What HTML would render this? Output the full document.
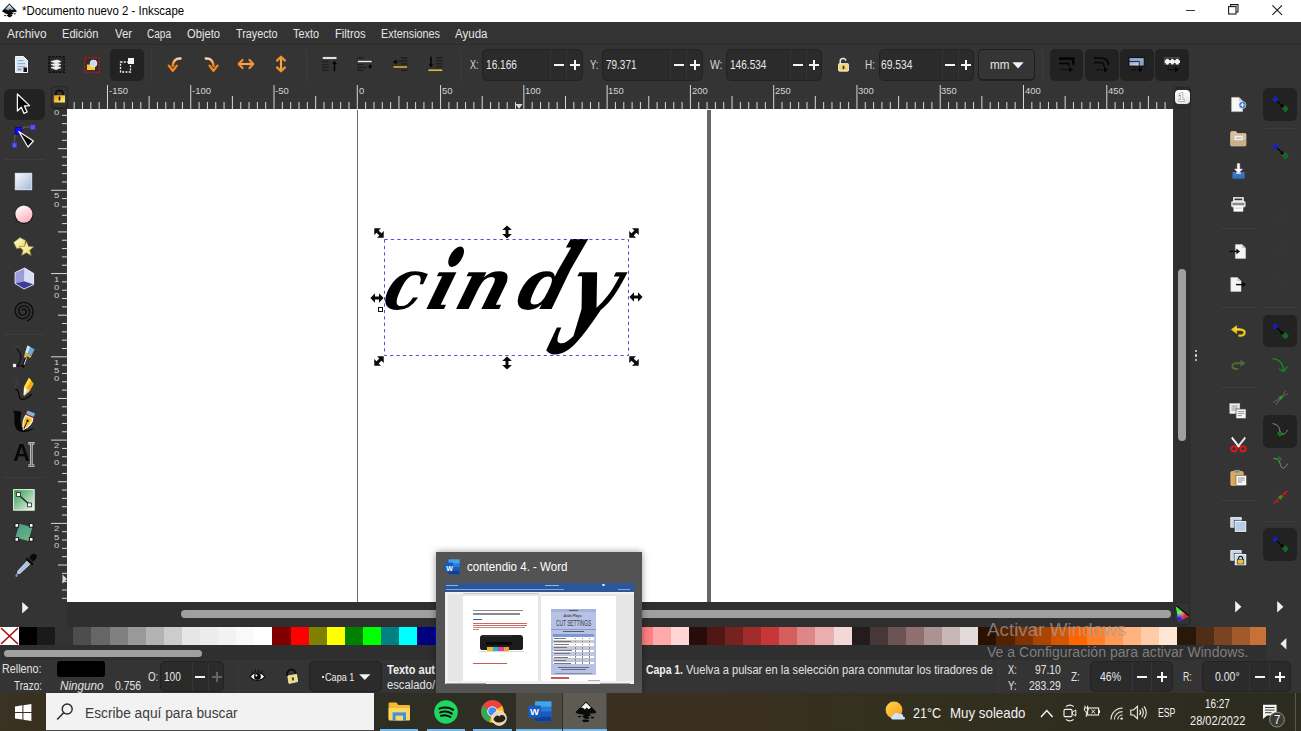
<!DOCTYPE html><html lang="es"><head><meta charset="utf-8"><title>Documento nuevo 2 - Inkscape</title><style>
*{margin:0;padding:0;box-sizing:border-box}
html,body{width:1301px;height:731px;overflow:hidden;background:#343434;font-family:"Liberation Sans",sans-serif;font-size:12px;color:#ddd}
.a{position:absolute}
.t{position:absolute;white-space:nowrap;line-height:1;transform-origin:0 0}
#title{left:0;top:0;width:1301px;height:22px;background:#fff}
#menu{left:0;top:22px;width:1301px;height:22px;background:#333}
#tb{left:0;top:44px;width:1301px;height:42px;background:#343434;border-top:1px solid #2c2c2c}
.box{position:absolute;background:#2b2b2b;border:1px solid #222;border-radius:5px}
.sel{position:absolute;background:#222;border-radius:5px}
.sep{position:absolute;background:#3e3e3e}
#canvas{left:67px;top:108.5px;width:1106px;height:493px;background:#fff;overflow:hidden}
#task{left:0;top:693px;width:1301px;height:38px;background:linear-gradient(90deg,#3a3222 0,#37301f 3.5%,#2f2e24 29%,#2f2e24 39%,#3b2f22 47%,#3a2f20 55%,#34301f 68%,#2e2d1f 85%,#2c2c1e 100%)}
svg{position:absolute;overflow:visible}
</style></head><body>
<div id="title" class="a"></div>
<div class="t" style="left:22px;top:5px;font-size:12px;color:#000;transform:scaleX(0.949);">*Documento nuevo 2 - Inkscape</div>
<div id="menu" class="a"></div>
<div class="t" style="left:7px;top:27.5px;font-size:12px;color:#e4e4e4;transform:scaleX(0.987);">Archivo</div>
<div class="t" style="left:62px;top:27.5px;font-size:12px;color:#e4e4e4;transform:scaleX(0.927);">Edición</div>
<div class="t" style="left:114.5px;top:27.5px;font-size:12px;color:#e4e4e4;transform:scaleX(0.944);">Ver</div>
<div class="t" style="left:146.5px;top:27.5px;font-size:12px;color:#e4e4e4;transform:scaleX(0.837);">Capa</div>
<div class="t" style="left:186.5px;top:27.5px;font-size:12px;color:#e4e4e4;transform:scaleX(0.933);">Objeto</div>
<div class="t" style="left:235.5px;top:27.5px;font-size:12px;color:#e4e4e4;transform:scaleX(0.898);">Trayecto</div>
<div class="t" style="left:293px;top:27.5px;font-size:12px;color:#e4e4e4;transform:scaleX(0.907);">Texto</div>
<div class="t" style="left:334.5px;top:27.5px;font-size:12px;color:#e4e4e4;transform:scaleX(0.934);">Filtros</div>
<div class="t" style="left:380.5px;top:27.5px;font-size:12px;color:#e4e4e4;transform:scaleX(0.903);">Extensiones</div>
<div class="t" style="left:454.5px;top:27.5px;font-size:12px;color:#e4e4e4;transform:scaleX(0.961);">Ayuda</div>
<div id="tb" class="a"></div>
<svg width="13" height="17" viewBox="0 0 13 17" style="left:15px;top:56px;"><path d="M0.5 0.5 H8.5 L12.5 4.5 V16.5 H0.5 Z" fill="#dfe9f5" stroke="#f4f4f4" stroke-width="1"/><rect x="2.5" y="4" width="6" height="1.2" fill="#8fb0d8"/><rect x="2.5" y="7" width="7.5" height="1.2" fill="#8fb0d8"/><rect x="2.5" y="10" width="7.5" height="1.2" fill="#8fb0d8"/><rect x="2.5" y="12.5" width="4" height="2" fill="#9a9a9a"/><rect x="8.5" y="11.5" width="3.5" height="4.5" fill="#111"/></svg>
<svg width="17" height="17" viewBox="0 0 17 17" style="left:48px;top:56px;"><rect x="0.8" y="0.8" width="15.4" height="15.4" fill="#2a2a2a" stroke="#0c0c0c" stroke-width="1.4" stroke-dasharray="2 1.4"/><path d="M3 5.5 L9 4 L13 5.5 L8 7.2 Z M3 8.5 L9 7.2 L13 8.5 L8 10.3 Z M3 11.6 L9 10.3 L13 11.6 L8 13.6 Z" fill="#f4f4f4" stroke="#e8e8e8" stroke-width="0.8"/></svg>
<svg width="16" height="16" viewBox="0 0 16 16" style="left:84px;top:57px;"><rect x="0.8" y="0.8" width="14.4" height="14.4" fill="#2f2f2f" stroke="#d01010" stroke-width="1.4" stroke-dasharray="2 1.4"/><path d="M3 7.5 H8 L9 9 H11 V13 H3 Z" fill="#f2cf3a"/><circle cx="9.5" cy="6.5" r="3.4" fill="#c9d9ee" stroke="#e9eef5" stroke-width="0.8"/></svg>
<div class="a" style="left:109.5px;top:48.5px;width:34.5px;height:32.5px;background:#222;border-radius:5px"></div>
<svg width="17" height="17" viewBox="0 0 17 17" style="left:119px;top:57px;"><rect x="1.5" y="5" width="10" height="10" fill="none" stroke="#f0f0f0" stroke-width="1.3" stroke-dasharray="2 1.3"/><rect x="9" y="1" width="6" height="6" fill="#f4f4f4"/></svg>
<div class="a" style="left:151px;top:49px;width:1px;height:33px;background:#3c3c3c;"></div>
<svg width="16" height="16" viewBox="0 0 16 16" style="left:168px;top:56px;"><defs><linearGradient id="og" x1="0" y1="0" x2="0" y2="1"><stop offset="0" stop-color="#ffd9a8"/><stop offset="0.5" stop-color="#f59a36"/><stop offset="1" stop-color="#e67c10"/></linearGradient></defs><path d="M13.5 2.6 C7.5 2 4.8 5 4.8 11" fill="none" stroke="url(#og)" stroke-width="2.4"/><path d="M0.8 9.6 L4.8 14.8 L8.8 9.6" fill="none" stroke="#ef8a1e" stroke-width="2.3" stroke-linejoin="round" stroke-linecap="round"/></svg>
<svg width="16" height="16" viewBox="0 0 16 16" style="left:203px;top:56px;"><path d="M1.8 2.6 C7.8 2 10.5 5 10.5 11" fill="none" stroke="url(#og)" stroke-width="2.4"/><path d="M6.5 9.6 L10.5 14.8 L14.5 9.6" fill="none" stroke="#ef8a1e" stroke-width="2.3" stroke-linejoin="round" stroke-linecap="round"/></svg>
<svg width="18" height="12" viewBox="0 0 18 12" style="left:237px;top:58px;"><path d="M2 6 H16" stroke="#f7a550" stroke-width="2.2"/><path d="M5.5 2 L1.6 6 L5.5 10 M12.5 2 L16.4 6 L12.5 10" fill="none" stroke="#f2902a" stroke-width="2.2" stroke-linejoin="round" stroke-linecap="round"/></svg>
<svg width="12" height="18" viewBox="0 0 12 18" style="left:275px;top:55px;"><path d="M6 2 V16" stroke="#f7a550" stroke-width="2.2"/><path d="M2 5.6 L6 1.7 L10 5.6 M2 12.4 L6 16.3 L10 12.4" fill="none" stroke="#f2902a" stroke-width="2.2" stroke-linejoin="round" stroke-linecap="round"/></svg>
<div class="a" style="left:305.5px;top:49px;width:1px;height:33px;background:#3c3c3c;"></div>
<svg width="16" height="16" viewBox="0 0 16 16" style="left:322px;top:56px;"><rect x="0.3" y="0.8" width="14.6" height="2.4" fill="#f4f6fa" stroke="#222" stroke-width="0.6"/><g fill="#1f1f1f"><rect x="0" y="4.8" width="6.6" height="1.4"/><rect x="0" y="7.8" width="6.6" height="1.4"/><rect x="0" y="10.7" width="6.6" height="1.4"/><rect x="0" y="13.6" width="6.6" height="1.4"/></g><path d="M12.5 15.2 V7" stroke="#050505" stroke-width="1.5"/><path d="M10.2 8 L12.5 4.6 L14.8 8 Z" fill="#050505"/></svg>
<svg width="16" height="16" viewBox="0 0 16 16" style="left:357px;top:56px;"><g fill="#1f1f1f"><rect x="0" y="1.3" width="6.6" height="1.4"/><rect x="0" y="8" width="6.6" height="1.4"/><rect x="0" y="10.9" width="9.6" height="1.4"/><rect x="0" y="13.7" width="6.6" height="1.4"/></g><rect x="0.6" y="4.4" width="14.4" height="2.2" fill="#eef2f8" stroke="#222" stroke-width="0.6"/><path d="M11 11.2 L13.2 8 L15.4 11.2 Z M12.6 11 h1.2 v2 h-1.2z" fill="#050505"/></svg>
<svg width="16" height="16" viewBox="0 0 16 16" style="left:392px;top:56px;"><g fill="#1f1f1f"><rect x="9" y="1.3" width="6.6" height="1.4"/><rect x="6.2" y="4.2" width="9.4" height="1.4"/><rect x="9" y="7.2" width="6.6" height="1.4"/><rect x="9" y="13.7" width="6.6" height="1.4"/></g><rect x="1" y="9.9" width="14.4" height="2.2" fill="#d8b24a" stroke="#222" stroke-width="0.6"/><path d="M1 6 L4.4 3.6 V8.4 Z M4 5.4 h2 v1.2 h-2z" fill="#050505"/></svg>
<svg width="16" height="16" viewBox="0 0 16 16" style="left:427px;top:56px;"><g fill="#1f1f1f"><rect x="9" y="1.3" width="6.6" height="1.4"/><rect x="9" y="4.2" width="6.6" height="1.4"/><rect x="9" y="7.2" width="6.6" height="1.4"/><rect x="9" y="10" width="6.6" height="1.4"/></g><rect x="1" y="13" width="14.6" height="2.3" fill="#d8b24a" stroke="#222" stroke-width="0.6"/><path d="M4 0.8 V9" stroke="#050505" stroke-width="1.5"/><path d="M1.7 8.2 L4 11.6 L6.3 8.2 Z" fill="#050505"/></svg>
<div class="a" style="left:459.5px;top:49px;width:1px;height:33px;background:#3c3c3c;"></div>
<div class="box" style="left:482px;top:48.5px;width:100.5px;height:32.0px"></div>
<div class="t" style="left:470px;top:58.5px;font-size:12px;color:#d6d6d6;transform:scaleX(0.75);">X:</div>
<div class="t" style="left:485.5px;top:58.5px;font-size:12px;color:#e6e6e6;transform:scaleX(0.845);">16.166</div>
<div class="a" style="left:550px;top:49.5px;width:1px;height:30.0px;background:#353535;"></div>
<div class="a" style="left:566px;top:49.5px;width:1px;height:30.0px;background:#353535;"></div>
<div class="a" style="left:554px;top:64px;width:10px;height:2px;background:#f4f4f4;"></div>
<div class="a" style="left:570px;top:64px;width:10px;height:2px;background:#f4f4f4;"></div>
<div class="a" style="left:574px;top:60px;width:2px;height:10px;background:#f4f4f4;"></div>
<div class="box" style="left:602px;top:48.5px;width:100.5px;height:32.0px"></div>
<div class="t" style="left:590px;top:58.5px;font-size:12px;color:#d6d6d6;transform:scaleX(0.796);">Y:</div>
<div class="t" style="left:605.5px;top:58.5px;font-size:12px;color:#e6e6e6;transform:scaleX(0.831);">79.371</div>
<div class="a" style="left:670px;top:49.5px;width:1px;height:30.0px;background:#353535;"></div>
<div class="a" style="left:686px;top:49.5px;width:1px;height:30.0px;background:#353535;"></div>
<div class="a" style="left:674px;top:64px;width:10px;height:2px;background:#f4f4f4;"></div>
<div class="a" style="left:690px;top:64px;width:10px;height:2px;background:#f4f4f4;"></div>
<div class="a" style="left:694px;top:60px;width:2px;height:10px;background:#f4f4f4;"></div>
<div class="box" style="left:726px;top:48.5px;width:96px;height:32.0px"></div>
<div class="t" style="left:710px;top:58.5px;font-size:12px;color:#d6d6d6;transform:scaleX(0.865);">W:</div>
<div class="t" style="left:729.5px;top:58.5px;font-size:12px;color:#e6e6e6;transform:scaleX(0.841);">146.534</div>
<div class="a" style="left:789.5px;top:49.5px;width:1px;height:30.0px;background:#353535;"></div>
<div class="a" style="left:805.5px;top:49.5px;width:1px;height:30.0px;background:#353535;"></div>
<div class="a" style="left:793px;top:64px;width:10px;height:2px;background:#f4f4f4;"></div>
<div class="a" style="left:809px;top:64px;width:10px;height:2px;background:#f4f4f4;"></div>
<div class="a" style="left:813px;top:60px;width:2px;height:10px;background:#f4f4f4;"></div>
<div class="box" style="left:878.5px;top:48.5px;width:95.0px;height:32.0px"></div>
<div class="t" style="left:864.5px;top:58.5px;font-size:12px;color:#d6d6d6;transform:scaleX(0.833);">H:</div>
<div class="t" style="left:881px;top:58.5px;font-size:12px;color:#e6e6e6;transform:scaleX(0.858);">69.534</div>
<div class="a" style="left:941.5px;top:49.5px;width:1px;height:30.0px;background:#353535;"></div>
<div class="a" style="left:957.5px;top:49.5px;width:1px;height:30.0px;background:#353535;"></div>
<div class="a" style="left:945px;top:64px;width:10px;height:2px;background:#f4f4f4;"></div>
<div class="a" style="left:961px;top:64px;width:10px;height:2px;background:#f4f4f4;"></div>
<div class="a" style="left:965px;top:60px;width:2px;height:10px;background:#f4f4f4;"></div>
<svg width="13" height="15" viewBox="0 0 13 15" style="left:837px;top:57px;"><path d="M3.2 7 V4.2 C3.2 0.8 8.4 0.6 8.8 3.6" fill="none" stroke="#e8e8e8" stroke-width="1.5"/><rect x="1.5" y="6.6" width="10" height="7.6" rx="1" fill="#f1d77a" stroke="#fff6d0" stroke-width="0.8"/><rect x="5.6" y="8.8" width="1.8" height="3.4" fill="#333"/></svg>
<div class="box" style="left:978px;top:48.5px;width:57px;height:32px;background:#353535;border-color:#1f1f1f;border-bottom-width:2px"></div>
<div class="t" style="left:990px;top:58.5px;font-size:12px;color:#e6e6e6;transform:scaleX(0.975);">mm</div>
<svg width="12" height="7" viewBox="0 0 12 7" style="left:1012px;top:62px;"><path d="M0.3 0.2 H11.7 L6 6.6 Z" fill="#f4f4f4"/></svg>
<div class="a" style="left:1042px;top:49px;width:1px;height:33px;background:#3c3c3c;"></div>
<div class="a" style="left:1049.8px;top:48.5px;width:33.6px;height:32px;background:#222;border-radius:5px"></div>
<div class="a" style="left:1085.2px;top:48.5px;width:33.6px;height:32px;background:#222;border-radius:5px"></div>
<div class="a" style="left:1120.2px;top:48.5px;width:33.6px;height:32px;background:#222;border-radius:5px"></div>
<div class="a" style="left:1155.4px;top:48.5px;width:33.6px;height:32px;background:#222;border-radius:5px"></div>
<svg width="16" height="17" viewBox="0 0 16 17" style="left:1058px;top:57px;"><path d="M1 1.6 H15.2 V8" fill="none" stroke="#050505" stroke-width="2.6"/><path d="M1 6.4 H10.5 V9" fill="none" stroke="#050505" stroke-width="1.6"/><path d="M2.5 12.6 H11" stroke="#050505" stroke-width="1.3" stroke-dasharray="1.6 1.2"/><path d="M11 9.8 L15 12.6 L11 15.4 Z" fill="#050505"/></svg>
<svg width="16" height="17" viewBox="0 0 16 17" style="left:1093px;top:57px;"><path d="M1 1 H8 C13 1 15.4 3.6 15.4 8" fill="none" stroke="#050505" stroke-width="1.7"/><path d="M1 5.6 H6.4 C9.6 5.6 11 7 11 9.4" fill="none" stroke="#050505" stroke-width="1.5"/><path d="M2.5 12.6 H11" stroke="#050505" stroke-width="1.3" stroke-dasharray="1.6 1.2"/><path d="M11 9.8 L15 12.6 L11 15.4 Z" fill="#050505"/></svg>
<svg width="17" height="17" viewBox="0 0 17 17" style="left:1128px;top:57px;"><defs><linearGradient id="bg3" x1="0" y1="0" x2="1" y2="1"><stop offset="0" stop-color="#7fa3cc"/><stop offset="1" stop-color="#d6e2f0"/></linearGradient></defs><rect x="1" y="0.6" width="15.2" height="8.4" fill="#8aa9cf" stroke="#050505" stroke-width="0.9"/><rect x="1" y="4.6" width="10.2" height="4.4" fill="url(#bg3)" stroke="#1a1a1a" stroke-width="0.9"/><path d="M3.5 12.6 H11" stroke="#050505" stroke-width="1.3" stroke-dasharray="1.6 1.2"/><path d="M11 9.8 L15 12.6 L11 15.4 Z" fill="#050505"/></svg>
<svg width="17" height="17" viewBox="0 0 17 17" style="left:1164px;top:57px;"><rect x="0.6" y="0.4" width="15.4" height="7.4" fill="#f4f4f4"/><g fill="#161616"><rect x="0.6" y="0.4" width="15.4" height="1.3"/><path d="M0.6 1.5 h2.4 l-2.4 2.2z M0.6 7.8 v-2.2 l2.4 2.2z M8.3 1.5 l-2.3 2.1 l-2.3 -2.1z M8.3 7.8 l-2.3 -2.1 l-2.3 2.1z M13 1.5 l-2.3 2.1 l-2.3 -2.1z M13 7.8 l-2.3 -2.1 l-2.3 2.1z M16 1.5 v2.2 l-2.4 -2.2z M16 7.8 v-2.2 l-2.4 2.2z"/></g><path d="M3.5 12.6 H11" stroke="#050505" stroke-width="1.3" stroke-dasharray="1.6 1.2"/><path d="M11 9.8 L15 12.6 L11 15.4 Z" fill="#050505"/></svg>
<div id="canvas" class="a">
<div class="a" style="left:290px;top:1px;width:1px;height:492px;background:#6a6a6a"></div>
<div class="a" style="left:640px;top:1px;width:3.5px;height:492px;background:#666"></div>
</div>
<style>.L{position:absolute;font-family:"DejaVu Serif","Liberation Serif",serif;font-weight:bold;font-style:italic;line-height:1;color:#000;white-space:nowrap}.W{position:absolute;left:0;top:0;width:1301px;height:731px;transform-origin:0 309.0px;transform:skewX(-16deg);pointer-events:none}</style>
<div class="W" id="word"><span class="L" style="left:379.5px;top:248.65px;font-size:71px;transform-origin:0 60.35px;transform:scale(0.9,1.0);">c</span><span class="L" style="left:424px;top:248.65px;font-size:71px;transform-origin:0 60.35px;transform:scale(1.0,1.0);clip-path:inset(21.5px -40px -30px -20px);">i</span><span class="L" style="left:452px;top:248.65px;font-size:71px;transform-origin:0 60.35px;transform:scale(1.02,1.0);">n</span><span class="L" style="left:514px;top:248.65px;font-size:71px;transform-origin:0 60.35px;transform:scale(1.0,1.0);clip-path:inset(21.5px -40px -30px -20px);">d</span><span class="L" style="left:563.5px;top:248.65px;font-size:71px;transform-origin:0 60.35px;transform:scale(1.17,1.0);clip-path:inset(-5px -40px 10.2px -20px);">y</span></div>
<div class="W" aria-hidden="true"><span class="L" style="left:424px;top:248.65px;font-size:71px;transform-origin:0 22.00px;transform:scale(1.0,1.55);clip-path:inset(-5px -40px 49px -20px);">i</span> <span class="L" style="left:514px;top:248.65px;font-size:71px;transform-origin:0 22.00px;transform:skewX(-11deg) scale(1.0,2.0);clip-path:inset(-5px -40px 49px -20px);">d</span> <span class="L" style="left:563.5px;top:248.65px;font-size:71px;transform-origin:0 60.35px;transform:skewX(-6deg) scale(1.17,2.95);clip-path:inset(60.2px -40px -30px -40px);">y</span></div>
<svg width="1301" height="731" viewBox="0 0 1301 731" style="left:0px;top:0px;"><rect x="384.5" y="239.5" width="244" height="116" fill="none" stroke="#3a3ad8" stroke-width="0.9" stroke-dasharray="3.2 3.2"/></svg>
<svg width="14" height="14" viewBox="0 0 14 14" style="left:371.6px;top:226.4px;"><g transform="rotate(45 7 7)"><path d="M0.4 7 L5 2.2 V5.5 H9 V2.2 L13.6 7 L9 11.8 V8.5 H5 V11.8 Z" fill="#0a0a0a"/></g></svg>
<svg width="14" height="14" viewBox="0 0 14 14" style="left:627.2px;top:226.2px;"><g transform="rotate(-45 7 7)"><path d="M0.4 7 L5 2.2 V5.5 H9 V2.2 L13.6 7 L9 11.8 V8.5 H5 V11.8 Z" fill="#0a0a0a"/></g></svg>
<svg width="14" height="14" viewBox="0 0 14 14" style="left:371.6px;top:354.4px;"><g transform="rotate(-45 7 7)"><path d="M0.4 7 L5 2.2 V5.5 H9 V2.2 L13.6 7 L9 11.8 V8.5 H5 V11.8 Z" fill="#0a0a0a"/></g></svg>
<svg width="14" height="14" viewBox="0 0 14 14" style="left:627.2px;top:354.4px;"><g transform="rotate(45 7 7)"><path d="M0.4 7 L5 2.2 V5.5 H9 V2.2 L13.6 7 L9 11.8 V8.5 H5 V11.8 Z" fill="#0a0a0a"/></g></svg>
<svg width="14" height="14" viewBox="0 0 14 14" style="left:499.6px;top:224.8px;"><g transform="rotate(90 7 7)"><path d="M0.4 7 L5 2.2 V5.5 H9 V2.2 L13.6 7 L9 11.8 V8.5 H5 V11.8 Z" fill="#0a0a0a"/></g></svg>
<svg width="14" height="14" viewBox="0 0 14 14" style="left:499.6px;top:356.2px;"><g transform="rotate(90 7 7)"><path d="M0.4 7 L5 2.2 V5.5 H9 V2.2 L13.6 7 L9 11.8 V8.5 H5 V11.8 Z" fill="#0a0a0a"/></g></svg>
<svg width="14" height="14" viewBox="0 0 14 14" style="left:370px;top:290.6px;"><g transform="rotate(0 7 7)"><path d="M0.4 7 L5 2.2 V5.5 H9 V2.2 L13.6 7 L9 11.8 V8.5 H5 V11.8 Z" fill="#0a0a0a"/></g></svg>
<svg width="14" height="14" viewBox="0 0 14 14" style="left:629px;top:290.4px;"><g transform="rotate(0 7 7)"><path d="M0.4 7 L5 2.2 V5.5 H9 V2.2 L13.6 7 L9 11.8 V8.5 H5 V11.8 Z" fill="#0a0a0a"/></g></svg>
<div class="a" style="left:378px;top:307px;width:5px;height:4.6px;border:1px solid #111;background:#fff"></div>
<svg width="1301" height="731" style="left:0;top:0" fill="#d8d8d8"><rect x="73.67" y="102" width="1" height="7"/><rect x="81.99" y="102" width="1" height="7"/><rect x="90.32" y="102" width="1" height="7"/><rect x="98.65" y="102" width="1" height="7"/><rect x="106.98" y="85" width="1" height="24"/><rect x="115.30" y="102" width="1" height="7"/><rect x="123.63" y="102" width="1" height="7"/><rect x="131.96" y="102" width="1" height="7"/><rect x="140.29" y="102" width="1" height="7"/><rect x="148.61" y="96" width="1" height="13"/><rect x="156.94" y="102" width="1" height="7"/><rect x="165.27" y="102" width="1" height="7"/><rect x="173.60" y="102" width="1" height="7"/><rect x="181.92" y="102" width="1" height="7"/><rect x="190.25" y="85" width="1" height="24"/><rect x="198.58" y="102" width="1" height="7"/><rect x="206.91" y="102" width="1" height="7"/><rect x="215.23" y="102" width="1" height="7"/><rect x="223.56" y="102" width="1" height="7"/><rect x="231.89" y="96" width="1" height="13"/><rect x="240.22" y="102" width="1" height="7"/><rect x="248.54" y="102" width="1" height="7"/><rect x="256.87" y="102" width="1" height="7"/><rect x="265.20" y="102" width="1" height="7"/><rect x="273.52" y="85" width="1" height="24"/><rect x="281.85" y="102" width="1" height="7"/><rect x="290.18" y="102" width="1" height="7"/><rect x="298.51" y="102" width="1" height="7"/><rect x="306.84" y="102" width="1" height="7"/><rect x="315.16" y="96" width="1" height="13"/><rect x="323.49" y="102" width="1" height="7"/><rect x="331.82" y="102" width="1" height="7"/><rect x="340.14" y="102" width="1" height="7"/><rect x="348.47" y="102" width="1" height="7"/><rect x="356.80" y="85" width="1" height="24"/><rect x="365.13" y="102" width="1" height="7"/><rect x="373.46" y="102" width="1" height="7"/><rect x="381.78" y="102" width="1" height="7"/><rect x="390.11" y="102" width="1" height="7"/><rect x="398.44" y="96" width="1" height="13"/><rect x="406.76" y="102" width="1" height="7"/><rect x="415.09" y="102" width="1" height="7"/><rect x="423.42" y="102" width="1" height="7"/><rect x="431.75" y="102" width="1" height="7"/><rect x="440.08" y="85" width="1" height="24"/><rect x="448.40" y="102" width="1" height="7"/><rect x="456.73" y="102" width="1" height="7"/><rect x="465.06" y="102" width="1" height="7"/><rect x="473.38" y="102" width="1" height="7"/><rect x="481.71" y="96" width="1" height="13"/><rect x="490.04" y="102" width="1" height="7"/><rect x="498.37" y="102" width="1" height="7"/><rect x="506.70" y="102" width="1" height="7"/><rect x="515.02" y="102" width="1" height="7"/><rect x="523.35" y="85" width="1" height="24"/><rect x="531.68" y="102" width="1" height="7"/><rect x="540.00" y="102" width="1" height="7"/><rect x="548.33" y="102" width="1" height="7"/><rect x="556.66" y="102" width="1" height="7"/><rect x="564.99" y="96" width="1" height="13"/><rect x="573.32" y="102" width="1" height="7"/><rect x="581.64" y="102" width="1" height="7"/><rect x="589.97" y="102" width="1" height="7"/><rect x="598.30" y="102" width="1" height="7"/><rect x="606.62" y="85" width="1" height="24"/><rect x="614.95" y="102" width="1" height="7"/><rect x="623.28" y="102" width="1" height="7"/><rect x="631.61" y="102" width="1" height="7"/><rect x="639.93" y="102" width="1" height="7"/><rect x="648.26" y="96" width="1" height="13"/><rect x="656.59" y="102" width="1" height="7"/><rect x="664.92" y="102" width="1" height="7"/><rect x="673.25" y="102" width="1" height="7"/><rect x="681.57" y="102" width="1" height="7"/><rect x="689.90" y="85" width="1" height="24"/><rect x="698.23" y="102" width="1" height="7"/><rect x="706.56" y="102" width="1" height="7"/><rect x="714.88" y="102" width="1" height="7"/><rect x="723.21" y="102" width="1" height="7"/><rect x="731.54" y="96" width="1" height="13"/><rect x="739.87" y="102" width="1" height="7"/><rect x="748.19" y="102" width="1" height="7"/><rect x="756.52" y="102" width="1" height="7"/><rect x="764.85" y="102" width="1" height="7"/><rect x="773.17" y="85" width="1" height="24"/><rect x="781.50" y="102" width="1" height="7"/><rect x="789.83" y="102" width="1" height="7"/><rect x="798.16" y="102" width="1" height="7"/><rect x="806.49" y="102" width="1" height="7"/><rect x="814.81" y="96" width="1" height="13"/><rect x="823.14" y="102" width="1" height="7"/><rect x="831.47" y="102" width="1" height="7"/><rect x="839.80" y="102" width="1" height="7"/><rect x="848.12" y="102" width="1" height="7"/><rect x="856.45" y="85" width="1" height="24"/><rect x="864.78" y="102" width="1" height="7"/><rect x="873.11" y="102" width="1" height="7"/><rect x="881.43" y="102" width="1" height="7"/><rect x="889.76" y="102" width="1" height="7"/><rect x="898.09" y="96" width="1" height="13"/><rect x="906.41" y="102" width="1" height="7"/><rect x="914.74" y="102" width="1" height="7"/><rect x="923.07" y="102" width="1" height="7"/><rect x="931.40" y="102" width="1" height="7"/><rect x="939.72" y="85" width="1" height="24"/><rect x="948.05" y="102" width="1" height="7"/><rect x="956.38" y="102" width="1" height="7"/><rect x="964.71" y="102" width="1" height="7"/><rect x="973.04" y="102" width="1" height="7"/><rect x="981.36" y="96" width="1" height="13"/><rect x="989.69" y="102" width="1" height="7"/><rect x="998.02" y="102" width="1" height="7"/><rect x="1006.35" y="102" width="1" height="7"/><rect x="1014.67" y="102" width="1" height="7"/><rect x="1023.00" y="85" width="1" height="24"/><rect x="1031.33" y="102" width="1" height="7"/><rect x="1039.65" y="102" width="1" height="7"/><rect x="1047.98" y="102" width="1" height="7"/><rect x="1056.31" y="102" width="1" height="7"/><rect x="1064.64" y="96" width="1" height="13"/><rect x="1072.96" y="102" width="1" height="7"/><rect x="1081.29" y="102" width="1" height="7"/><rect x="1089.62" y="102" width="1" height="7"/><rect x="1097.95" y="102" width="1" height="7"/><rect x="1106.28" y="85" width="1" height="24"/><rect x="1114.60" y="102" width="1" height="7"/><rect x="1122.93" y="102" width="1" height="7"/><rect x="1131.26" y="102" width="1" height="7"/><rect x="1139.59" y="102" width="1" height="7"/><rect x="1147.91" y="96" width="1" height="13"/><rect x="1156.24" y="102" width="1" height="7"/><rect x="1164.57" y="102" width="1" height="7"/><rect x="62" y="114.83" width="5" height="1"/><rect x="62" y="123.16" width="5" height="1"/><rect x="62" y="131.48" width="5" height="1"/><rect x="62" y="139.81" width="5" height="1"/><rect x="58" y="148.14" width="9" height="1"/><rect x="62" y="156.47" width="5" height="1"/><rect x="62" y="164.79" width="5" height="1"/><rect x="62" y="173.12" width="5" height="1"/><rect x="62" y="181.45" width="5" height="1"/><rect x="51" y="189.78" width="16" height="1"/><rect x="62" y="198.10" width="5" height="1"/><rect x="62" y="206.43" width="5" height="1"/><rect x="62" y="214.76" width="5" height="1"/><rect x="62" y="223.08" width="5" height="1"/><rect x="58" y="231.41" width="9" height="1"/><rect x="62" y="239.74" width="5" height="1"/><rect x="62" y="248.07" width="5" height="1"/><rect x="62" y="256.39" width="5" height="1"/><rect x="62" y="264.72" width="5" height="1"/><rect x="51" y="273.05" width="16" height="1"/><rect x="62" y="281.38" width="5" height="1"/><rect x="62" y="289.70" width="5" height="1"/><rect x="62" y="298.03" width="5" height="1"/><rect x="62" y="306.36" width="5" height="1"/><rect x="58" y="314.69" width="9" height="1"/><rect x="62" y="323.01" width="5" height="1"/><rect x="62" y="331.34" width="5" height="1"/><rect x="62" y="339.67" width="5" height="1"/><rect x="62" y="348.00" width="5" height="1"/><rect x="51" y="356.32" width="16" height="1"/><rect x="62" y="364.65" width="5" height="1"/><rect x="62" y="372.98" width="5" height="1"/><rect x="62" y="381.31" width="5" height="1"/><rect x="62" y="389.63" width="5" height="1"/><rect x="58" y="397.96" width="9" height="1"/><rect x="62" y="406.29" width="5" height="1"/><rect x="62" y="414.62" width="5" height="1"/><rect x="62" y="422.94" width="5" height="1"/><rect x="62" y="431.27" width="5" height="1"/><rect x="51" y="439.60" width="16" height="1"/><rect x="62" y="447.93" width="5" height="1"/><rect x="62" y="456.25" width="5" height="1"/><rect x="62" y="464.58" width="5" height="1"/><rect x="62" y="472.91" width="5" height="1"/><rect x="58" y="481.24" width="9" height="1"/><rect x="62" y="489.56" width="5" height="1"/><rect x="62" y="497.89" width="5" height="1"/><rect x="62" y="506.22" width="5" height="1"/><rect x="62" y="514.55" width="5" height="1"/><rect x="51" y="522.88" width="16" height="1"/><rect x="62" y="531.20" width="5" height="1"/><rect x="62" y="539.53" width="5" height="1"/><rect x="62" y="547.86" width="5" height="1"/><rect x="62" y="556.18" width="5" height="1"/><rect x="58" y="564.51" width="9" height="1"/><rect x="62" y="572.84" width="5" height="1"/><rect x="62" y="581.17" width="5" height="1"/><rect x="62" y="589.50" width="5" height="1"/><rect x="62" y="597.82" width="5" height="1"/><path d="M515.5 104 L522.5 104 L519 109 Z"/><path d="M62.5 574.5 L67 579 L62.5 583.5 Z"/></svg>
<div class="t" style="left:108.7px;top:87.2px;font-size:9px;color:#d4d4d4;transform:scaleX(1.05);">-150</div>
<div class="t" style="left:191.9px;top:87.2px;font-size:9px;color:#d4d4d4;transform:scaleX(1.05);">-100</div>
<div class="t" style="left:275.2px;top:87.2px;font-size:9px;color:#d4d4d4;transform:scaleX(1.05);">-50</div>
<div class="t" style="left:358.5px;top:87.2px;font-size:9px;color:#d4d4d4;transform:scaleX(1.05);">0</div>
<div class="t" style="left:441.8px;top:87.2px;font-size:9px;color:#d4d4d4;transform:scaleX(1.05);">50</div>
<div class="t" style="left:525.1px;top:87.2px;font-size:9px;color:#d4d4d4;transform:scaleX(1.05);">100</div>
<div class="t" style="left:608.3px;top:87.2px;font-size:9px;color:#d4d4d4;transform:scaleX(1.05);">150</div>
<div class="t" style="left:691.6px;top:87.2px;font-size:9px;color:#d4d4d4;transform:scaleX(1.05);">200</div>
<div class="t" style="left:774.9px;top:87.2px;font-size:9px;color:#d4d4d4;transform:scaleX(1.05);">250</div>
<div class="t" style="left:858.2px;top:87.2px;font-size:9px;color:#d4d4d4;transform:scaleX(1.05);">300</div>
<div class="t" style="left:941.4px;top:87.2px;font-size:9px;color:#d4d4d4;transform:scaleX(1.05);">350</div>
<div class="t" style="left:1024.7px;top:87.2px;font-size:9px;color:#d4d4d4;transform:scaleX(1.05);">400</div>
<div class="t" style="left:1108.0px;top:87.2px;font-size:9px;color:#d4d4d4;transform:scaleX(1.05);">450</div>
<div class="t" style="left:54px;top:109.0px;font-size:9px;color:#d0d0d0;transform:scale(1.05,0.85);">0</div>
<div class="t" style="left:54px;top:192.3px;font-size:9px;color:#d0d0d0;transform:scale(1.05,0.85);">5</div>
<div class="t" style="left:54px;top:200.5px;font-size:9px;color:#d0d0d0;transform:scale(1.05,0.85);">0</div>
<div class="t" style="left:54px;top:275.6px;font-size:9px;color:#d0d0d0;transform:scale(1.05,0.85);">1</div>
<div class="t" style="left:54px;top:283.8px;font-size:9px;color:#d0d0d0;transform:scale(1.05,0.85);">0</div>
<div class="t" style="left:54px;top:291.9px;font-size:9px;color:#d0d0d0;transform:scale(1.05,0.85);">0</div>
<div class="t" style="left:54px;top:358.8px;font-size:9px;color:#d0d0d0;transform:scale(1.05,0.85);">1</div>
<div class="t" style="left:54px;top:367.0px;font-size:9px;color:#d0d0d0;transform:scale(1.05,0.85);">5</div>
<div class="t" style="left:54px;top:375.2px;font-size:9px;color:#d0d0d0;transform:scale(1.05,0.85);">0</div>
<div class="t" style="left:54px;top:442.1px;font-size:9px;color:#d0d0d0;transform:scale(1.05,0.85);">2</div>
<div class="t" style="left:54px;top:450.3px;font-size:9px;color:#d0d0d0;transform:scale(1.05,0.85);">0</div>
<div class="t" style="left:54px;top:458.5px;font-size:9px;color:#d0d0d0;transform:scale(1.05,0.85);">0</div>
<div class="t" style="left:54px;top:525.4px;font-size:9px;color:#d0d0d0;transform:scale(1.05,0.85);">2</div>
<div class="t" style="left:54px;top:533.6px;font-size:9px;color:#d0d0d0;transform:scale(1.05,0.85);">5</div>
<div class="t" style="left:54px;top:541.8px;font-size:9px;color:#d0d0d0;transform:scale(1.05,0.85);">0</div>
<div class="a" style="left:1173px;top:86px;width:18px;height:541px;background:#2f2f2f;"></div>
<div class="a" style="left:67px;top:601.5px;width:1124px;height:25.5px;background:#2f2f2f;"></div>
<div class="a" style="left:0px;top:645px;width:1266px;height:15px;background:#2f2f2f;"></div>
<div class="a" style="left:1178px;top:269px;width:8px;height:172px;background:#a0a0a0;border-radius:4px"></div>
<div class="a" style="left:181px;top:610px;width:990px;height:8px;background:#a0a0a0;border-radius:4px"></div>
<div class="a" style="left:1194.7px;top:349.7px;width:2.6px;height:2.6px;background:#ddd;border-radius:50%"></div>
<div class="a" style="left:1194.7px;top:354.2px;width:2.6px;height:2.6px;background:#ddd;border-radius:50%"></div>
<div class="a" style="left:1194.7px;top:358.7px;width:2.6px;height:2.6px;background:#ddd;border-radius:50%"></div>
<div class="a" style="left:0px;top:627px;width:19px;height:18px;background:#fff;"></div>
<svg width="19" height="18" style="left:0;top:627px"><path d="M1 1 L18 17 M18 1 L1 17" stroke="#a01010" stroke-width="1.6"/></svg>
<div class="a" style="left:19.0px;top:627px;width:18.4px;height:18px;background:#000000;"></div>
<div class="a" style="left:37.1px;top:627px;width:18.4px;height:18px;background:#1a1a1a;"></div>
<div class="a" style="left:55.2px;top:627px;width:18.4px;height:18px;background:#333333;"></div>
<div class="a" style="left:73.3px;top:627px;width:18.4px;height:18px;background:#4d4d4d;"></div>
<div class="a" style="left:91.4px;top:627px;width:18.4px;height:18px;background:#666666;"></div>
<div class="a" style="left:109.5px;top:627px;width:18.4px;height:18px;background:#808080;"></div>
<div class="a" style="left:127.6px;top:627px;width:18.4px;height:18px;background:#999999;"></div>
<div class="a" style="left:145.7px;top:627px;width:18.4px;height:18px;background:#b3b3b3;"></div>
<div class="a" style="left:163.8px;top:627px;width:18.4px;height:18px;background:#cccccc;"></div>
<div class="a" style="left:181.9px;top:627px;width:18.4px;height:18px;background:#e6e6e6;"></div>
<div class="a" style="left:200.0px;top:627px;width:18.4px;height:18px;background:#ececec;"></div>
<div class="a" style="left:218.1px;top:627px;width:18.4px;height:18px;background:#f2f2f2;"></div>
<div class="a" style="left:236.2px;top:627px;width:18.4px;height:18px;background:#f9f9f9;"></div>
<div class="a" style="left:254.3px;top:627px;width:18.4px;height:18px;background:#ffffff;"></div>
<div class="a" style="left:272.4px;top:627px;width:18.4px;height:18px;background:#800000;"></div>
<div class="a" style="left:290.5px;top:627px;width:18.4px;height:18px;background:#ff0000;"></div>
<div class="a" style="left:308.6px;top:627px;width:18.4px;height:18px;background:#808000;"></div>
<div class="a" style="left:326.7px;top:627px;width:18.4px;height:18px;background:#ffff00;"></div>
<div class="a" style="left:344.8px;top:627px;width:18.4px;height:18px;background:#008000;"></div>
<div class="a" style="left:362.9px;top:627px;width:18.4px;height:18px;background:#00ff00;"></div>
<div class="a" style="left:381.0px;top:627px;width:18.4px;height:18px;background:#008080;"></div>
<div class="a" style="left:399.1px;top:627px;width:18.4px;height:18px;background:#00ffff;"></div>
<div class="a" style="left:417.2px;top:627px;width:18.4px;height:18px;background:#000080;"></div>
<div class="a" style="left:435.3px;top:627px;width:18.4px;height:18px;background:#0000ff;"></div>
<div class="a" style="left:453.4px;top:627px;width:18.4px;height:18px;background:#800080;"></div>
<div class="a" style="left:471.5px;top:627px;width:18.4px;height:18px;background:#ff00ff;"></div>
<div class="a" style="left:489.6px;top:627px;width:18.4px;height:18px;background:#2b0000;"></div>
<div class="a" style="left:507.7px;top:627px;width:18.4px;height:18px;background:#550000;"></div>
<div class="a" style="left:525.8px;top:627px;width:18.4px;height:18px;background:#800000;"></div>
<div class="a" style="left:543.9px;top:627px;width:18.4px;height:18px;background:#aa0000;"></div>
<div class="a" style="left:562.0px;top:627px;width:18.4px;height:18px;background:#d40000;"></div>
<div class="a" style="left:580.1px;top:627px;width:18.4px;height:18px;background:#ff0000;"></div>
<div class="a" style="left:598.2px;top:627px;width:18.4px;height:18px;background:#ff2a2a;"></div>
<div class="a" style="left:616.3px;top:627px;width:18.4px;height:18px;background:#ff5555;"></div>
<div class="a" style="left:634.4px;top:627px;width:18.4px;height:18px;background:#ff8080;"></div>
<div class="a" style="left:652.5px;top:627px;width:18.4px;height:18px;background:#ffaaaa;"></div>
<div class="a" style="left:670.6px;top:627px;width:18.4px;height:18px;background:#ffd5d5;"></div>
<div class="a" style="left:688.7px;top:627px;width:18.4px;height:18px;background:#280b0b;"></div>
<div class="a" style="left:706.8px;top:627px;width:18.4px;height:18px;background:#501616;"></div>
<div class="a" style="left:724.9px;top:627px;width:18.4px;height:18px;background:#782121;"></div>
<div class="a" style="left:743.0px;top:627px;width:18.4px;height:18px;background:#a02c2c;"></div>
<div class="a" style="left:761.1px;top:627px;width:18.4px;height:18px;background:#c83737;"></div>
<div class="a" style="left:779.2px;top:627px;width:18.4px;height:18px;background:#d35f5f;"></div>
<div class="a" style="left:797.3px;top:627px;width:18.4px;height:18px;background:#de8787;"></div>
<div class="a" style="left:815.4px;top:627px;width:18.4px;height:18px;background:#e9afaf;"></div>
<div class="a" style="left:833.5px;top:627px;width:18.4px;height:18px;background:#f4d7d7;"></div>
<div class="a" style="left:851.6px;top:627px;width:18.4px;height:18px;background:#241c1c;"></div>
<div class="a" style="left:869.7px;top:627px;width:18.4px;height:18px;background:#483737;"></div>
<div class="a" style="left:887.8px;top:627px;width:18.4px;height:18px;background:#6c5353;"></div>
<div class="a" style="left:905.9px;top:627px;width:18.4px;height:18px;background:#916f6f;"></div>
<div class="a" style="left:924.0px;top:627px;width:18.4px;height:18px;background:#ac9393;"></div>
<div class="a" style="left:942.1px;top:627px;width:18.4px;height:18px;background:#c8b7b7;"></div>
<div class="a" style="left:960.2px;top:627px;width:18.4px;height:18px;background:#e3dbdb;"></div>
<div class="a" style="left:978.3px;top:627px;width:18.4px;height:18px;background:#2b1100;"></div>
<div class="a" style="left:996.4px;top:627px;width:18.4px;height:18px;background:#552200;"></div>
<div class="a" style="left:1014.5px;top:627px;width:18.4px;height:18px;background:#803300;"></div>
<div class="a" style="left:1032.6px;top:627px;width:18.4px;height:18px;background:#aa4400;"></div>
<div class="a" style="left:1050.7px;top:627px;width:18.4px;height:18px;background:#d45500;"></div>
<div class="a" style="left:1068.8px;top:627px;width:18.4px;height:18px;background:#ff6600;"></div>
<div class="a" style="left:1086.9px;top:627px;width:18.4px;height:18px;background:#ff7f2a;"></div>
<div class="a" style="left:1105.0px;top:627px;width:18.4px;height:18px;background:#ff9955;"></div>
<div class="a" style="left:1123.1px;top:627px;width:18.4px;height:18px;background:#ffb380;"></div>
<div class="a" style="left:1141.2px;top:627px;width:18.4px;height:18px;background:#ffccaa;"></div>
<div class="a" style="left:1159.3px;top:627px;width:18.4px;height:18px;background:#ffe6d5;"></div>
<div class="a" style="left:1177.4px;top:627px;width:18.4px;height:18px;background:#28170b;"></div>
<div class="a" style="left:1195.5px;top:627px;width:18.4px;height:18px;background:#502d16;"></div>
<div class="a" style="left:1213.6px;top:627px;width:18.4px;height:18px;background:#784421;"></div>
<div class="a" style="left:1231.7px;top:627px;width:18.4px;height:18px;background:#a05a2c;"></div>
<div class="a" style="left:1249.8px;top:627px;width:16.2px;height:18px;background:#c87137;"></div>
<div class="a" style="left:4px;top:649.5px;width:198px;height:7.5px;background:#a0a0a0;border-radius:4px"></div>
<svg width="10" height="12" style="left:1279px;top:638px"><path d="M7.4 0 L7.4 11.4 L1.4 5.7 Z" fill="#eee"/></svg>
<div class="a" style="left:4.2px;top:88.5px;width:40.8px;height:31px;background:#222;border-radius:6px"></div>
<svg width="20" height="24" viewBox="0 0 20 24" style="left:14px;top:92px;"><path d="M3.4 2 V19 L7.3 15.2 L10 21.4 L13.2 20 L10.4 14 L15.6 13.6 Z" fill="#0a0a0a" stroke="#f6f6f6" stroke-width="1.3" stroke-linejoin="round"/></svg>
<svg width="28" height="28" viewBox="0 0 28 28" style="left:10px;top:122px;"><path d="M8.5 8.8 Q12 4.6 20 4.8 M8 9.5 Q3.6 14 4.6 20" fill="none" stroke="#5a5a5a" stroke-width="1.2"/><rect x="5.2" y="5.6" width="6.6" height="6.6" fill="#1010e0" stroke="#0000c0" stroke-width="0.8"/><rect x="20.6" y="3" width="4.4" height="4.4" fill="#5a5af0" stroke="#3a3ad8" stroke-width="0.8"/><rect x="2.3" y="21" width="4.4" height="4.4" fill="#5a5af0" stroke="#3a3ad8" stroke-width="0.8"/><path d="M8.8 9.4 L23.4 19 L18 25 Z" fill="#0a0a0a" stroke="#f4f4f4" stroke-width="1.2" stroke-linejoin="round"/></svg>
<div class="a" style="left:4px;top:159px;width:41px;height:1px;background:#3d3d3d;"></div>
<svg width="21" height="21" viewBox="0 0 21 21" style="left:13px;top:171px;"><defs><linearGradient id="rg" x1="0" y1="0" x2="1" y2="1"><stop offset="0" stop-color="#fbfcfe"/><stop offset="1" stop-color="#9fb9d8"/></linearGradient></defs><rect x="1.2" y="1.2" width="18.6" height="18.6" fill="#1a1a1a"/><rect x="2.2" y="2.2" width="16.6" height="16.6" fill="url(#rg)" stroke="#eef2f8" stroke-width="0.9"/></svg>
<svg width="20" height="21" viewBox="0 0 20 21" style="left:14px;top:204px;"><defs><linearGradient id="cg" x1="0.2" y1="0" x2="0.8" y2="1"><stop offset="0" stop-color="#ffffff"/><stop offset="1" stop-color="#ffaab6"/></linearGradient></defs><circle cx="9.9" cy="10.6" r="9.3" fill="#151515"/><circle cx="9.9" cy="10.1" r="8.6" fill="url(#cg)"/></svg>
<svg width="23" height="22" viewBox="0 0 23 22" style="left:12px;top:236px;"><defs><linearGradient id="sg" x1="0" y1="0" x2="1" y2="1"><stop offset="0" stop-color="#fffce0"/><stop offset="1" stop-color="#ecd860"/></linearGradient></defs><path d="M8 1.6 L13.6 4.4 L12.6 11.6 L4.6 12.6 L1.6 6.4 Z" fill="url(#sg)" stroke="#8a7a20" stroke-width="0.6"/><path d="M14.6 5.4 L16.6 10.4 L21.8 10.8 L17.8 14.2 L19.2 19.6 L14.4 16.8 L9.6 19.4 L11 14.2 L7.2 10.6 L12.4 10.4 Z" fill="url(#sg)" stroke="#8a7a20" stroke-width="0.6"/></svg>
<svg width="21" height="23" viewBox="0 0 21 23" style="left:14px;top:267px;"><path d="M10.6 1 L19.6 6.4 V17.6 L10 22 L1 16.6 V5.6 Z" fill="#e8e8f8"/><path d="M1 5.6 L10.6 1 L10.2 14.2 L1 16.6 Z" fill="#9c9cd8"/><path d="M10.6 1 L19.6 6.4 V17.6 L10.2 14.2 Z" fill="#dcdcf6"/><path d="M1 16.6 L10.2 14.2 L19.6 17.6 L10 22 Z" fill="#3c3c9a"/><path d="M10.6 1 L19.6 6.4 V17.6 L10 22 L1 16.6 V5.6 Z" fill="none" stroke="#f0f0ff" stroke-width="0.8"/></svg>
<svg width="23" height="23" viewBox="0 0 23 23" style="left:12px;top:300px;"><path d="M10.0 10.4 L10.1 10.1 L10.3 9.8 L10.5 9.6 L10.8 9.4 L11.2 9.2 L11.5 9.1 L12.0 9.1 L12.4 9.2 L12.8 9.3 L13.2 9.6 L13.6 9.9 L13.9 10.3 L14.1 10.8 L14.3 11.3 L14.3 11.8 L14.3 12.4 L14.1 13.0 L13.8 13.5 L13.4 14.0 L13.0 14.4 L12.4 14.8 L11.8 15.0 L11.1 15.1 L10.4 15.1 L9.7 15.0 L9.0 14.7 L8.3 14.3 L7.7 13.8 L7.3 13.1 L6.9 12.4 L6.7 11.6 L6.6 10.7 L6.7 9.9 L6.9 9.0 L7.3 8.2 L7.9 7.5 L8.6 6.8 L9.4 6.3 L10.3 6.0 L11.3 5.8 L12.3 5.8 L13.3 6.0 L14.3 6.3 L15.2 6.9 L16.0 7.6 L16.7 8.5 L17.2 9.5 L17.5 10.6 L17.7 11.7 L17.6 12.9 L17.3 14.0 L16.8 15.1 L16.1 16.1 L15.2 17.0 L14.1 17.7 L13.0 18.2 L11.7 18.5 L10.4 18.5 L9.1 18.3 L7.8 17.9 L6.6 17.2 L5.5 16.3 L4.6 15.3 L3.9 14.0 L3.5 12.7 L3.2 11.2 L3.3 9.8 L3.6 8.3 L4.2 6.9 L5.0 5.6 L6.1 4.5 L7.4 3.6 L8.8 2.9 L10.3 2.5 L11.9 2.4 L13.5 2.6 L15.1 3.0 L16.6 3.8 L18.0 4.8 L19.1 6.0 L20.0 7.5 L20.7 9.1 L21.0 10.8 L21.0 12.6 L20.7 14.4 L20.1 16.1 L19.2 17.6 L18.0 19.0 L16.5 20.2 L14.9 21.1" fill="none" stroke="#0a0a0a" stroke-width="1.25"/></svg>
<div class="a" style="left:4px;top:334px;width:41px;height:1px;background:#3d3d3d;"></div>
<svg width="25" height="25" viewBox="0 0 25 25" style="left:12px;top:344px;"><path d="M2 2.6 H7" stroke="#484848" stroke-width="0.8"/><path d="M4.6 4.4 C8 8 10 12 8.6 16 C8 18.6 6.4 21 4 21.8" fill="none" stroke="#0a0a0a" stroke-width="1.1"/><path d="M4 22 H11.4" stroke="#0a0a0a" stroke-width="1.1"/><path d="M15.4 1.4 L22.6 5.2 L19.4 12 L13.2 8.6 Z" fill="#6fa8cc"/><path d="M15.4 1.4 L18.2 2.8 L15.4 9.8 L13.2 8.6 Z" fill="#cfe6f4"/><path d="M13.2 8.6 L19.4 12 L18.4 14 L12.4 10.8 Z" fill="#f0b828"/><path d="M12.6 11 L15 12.4 L12.4 14 Z" fill="#fff4d8"/><path d="M14.6 13.6 L12 20.6" stroke="#e8e8e8" stroke-width="1"/><path d="M13.6 13.4 L10.8 20.8" stroke="#0a0a0a" stroke-width="0.9"/><rect x="0.6" y="19.6" width="3.8" height="3.8" rx="0.6" fill="#fff" stroke="#111" stroke-width="0.6"/><ellipse cx="11.4" cy="22.2" rx="1.1" ry="1.5" fill="#0a0a0a"/></svg>
<svg width="25" height="24" viewBox="0 0 25 24" style="left:12px;top:377px;"><path d="M1.4 2 H6 L3 10.4" fill="none" stroke="#444" stroke-width="0.9"/><path d="M17 0.8 L21.8 6.8 L18 13.6 L12 10 Z" fill="#f8a818"/><path d="M17 0.8 L19 3.2 L14.4 11.4 L12 10 Z" fill="#ffe040"/><path d="M12 10 L18 13.6 L11.4 19.4 Z" fill="#fff8ec"/><path d="M15.4 12 L18 13.6 L11.4 19.4 Z" fill="#f4c870"/><path d="M11 18.4 L12.6 18.4 L11 20.6 Z" fill="#111"/><path d="M3.4 12.4 C8 12 6 20 8.4 21.6 C11 23.4 16 21.4 19.6 17" fill="none" stroke="#0a0a0a" stroke-width="1.3"/></svg>
<svg width="26" height="25" viewBox="0 0 26 25" style="left:11px;top:409px;"><path d="M1.6 1.6 L8.4 2.2 C10 2.4 10.6 3.6 10.2 5 C8.8 10 9 15 11.4 19.6 C14 21.6 19 20.6 23.4 19.2 C19 22.6 12.6 23.8 9 22.6 C4 21 3 15 3.4 9 C3.6 6 3.6 3.6 1.6 1.6 Z" fill="#070707"/><path d="M16.6 1.6 L24.2 4.6 L22.6 8 L15.2 5 Z" fill="#7fb4d8"/><path d="M15.4 5 L22.6 8 L22 9.6 L14.8 6.6 Z" fill="#e01818"/><path d="M14.6 6.6 L21.8 9.6 C21.6 13 18 17.6 12.4 20.6 C11.4 16 12 10.6 14.6 6.6 Z" fill="#f4c430" stroke="#fff8e0" stroke-width="1.1"/><path d="M12.8 19.8 L16.2 12.6" stroke="#111" stroke-width="1"/><circle cx="16.6" cy="11.8" r="1.2" fill="#111"/></svg>
<div class="t" style="left:13px;top:441.4px;font-size:24.7px;font-weight:bold;color:#080808;transform:scaleX(0.95);-webkit-text-stroke:0.7px #484848;paint-order:stroke fill">A</div>
<svg width="9" height="25" viewBox="0 0 9 25" style="left:27px;top:442px;"><path d="M1.4 1.2 H7.4 M1.4 23.6 H7.4 M4.4 1.2 V23.6" fill="none" stroke="#e6e6e6" stroke-width="2.4"/><path d="M1.8 1.2 H7 M1.8 23.6 H7 M4.4 1.2 V23.6" fill="none" stroke="#555" stroke-width="0.9"/></svg>
<div class="a" style="left:4px;top:477px;width:41px;height:1px;background:#3d3d3d;"></div>
<svg width="22" height="22" viewBox="0 0 22 22" style="left:13px;top:489px;"><defs><linearGradient id="gg" x1="0" y1="0" x2="1" y2="1"><stop offset="0" stop-color="#2f9a4c"/><stop offset="1" stop-color="#f0faf0"/></linearGradient></defs><rect x="0.6" y="0.6" width="20.6" height="20.6" fill="url(#gg)" stroke="#e8f4e8" stroke-width="1"/><path d="M5.4 5.6 L16.6 15.8" stroke="#111" stroke-width="1.2"/><rect x="3.6" y="3.6" width="3.8" height="3.8" fill="#fff" stroke="#222" stroke-width="0.8"/><rect x="14.6" y="14" width="3.8" height="3.8" fill="#fff" stroke="#222" stroke-width="0.8"/></svg>
<svg width="22" height="21" viewBox="0 0 22 21" style="left:13px;top:522px;"><defs><linearGradient id="mg" x1="0" y1="0" x2="1" y2="1"><stop offset="0" stop-color="#4a9a94"/><stop offset="1" stop-color="#6ab878"/></linearGradient></defs><path d="M4.4 3.2 L17.8 3.4 L17.4 17.6 L3.8 17.4 Z" fill="url(#mg)" transform="rotate(14 11 10.5)"/><g fill="#fff" stroke="#111" stroke-width="0.9"><rect x="2" y="1.6" width="3.6" height="3.6"/><rect x="16.4" y="1.6" width="3.6" height="3.6"/><rect x="2" y="15.6" width="3.6" height="3.6"/><rect x="16.4" y="15.6" width="3.6" height="3.6"/></g></svg>
<svg width="24" height="26" viewBox="0 0 24 26" style="left:14px;top:552px;"><path d="M13.6 8.6 L16.6 11.6 L6 21.4 L3.6 21.6 L3.8 19 Z" fill="#a8c4e0" stroke="#e8eef6" stroke-width="0.7"/><path d="M13 5.4 L19.8 12 L18 13.6 L11.4 7.2 Z" fill="#0a0a0a"/><path d="M15.4 6 C16 2 21 0.4 22.4 3 C24 6 20 9 18.4 9.6 Z" fill="#0a0a0a"/><path d="M2.8 21.6 C4.4 23 3.6 25 2.4 25 C1 25 1 23 2.8 21.6 Z" fill="#6aa0d8"/></svg>
<svg width="7" height="12" viewBox="0 0 7 12" style="left:22px;top:602px;"><path d="M0.2 0 L6.6 5.7 L0.2 11.4 Z" fill="#f2f2f2"/></svg>
<div class="a" style="left:51px;top:86px;width:16.5px;height:21.5px;background:#333;border:1px solid #262626;border-radius:4px;box-shadow:0 1px 1px #222"></div>
<svg width="15" height="17" viewBox="0 0 15 17" style="left:52px;top:88px;"><defs><linearGradient id="lk" x1="0" y1="0" x2="1" y2="1"><stop offset="0" stop-color="#e88a18"/><stop offset="0.6" stop-color="#f8d040"/><stop offset="1" stop-color="#fff0a0"/></linearGradient></defs><path d="M3.8 7.6 V5.6 C3.8 1.4 11 1.4 11 5.6 V7.6" fill="none" stroke="#0a0a0a" stroke-width="1.7"/><rect x="1.8" y="7.2" width="11.2" height="7.2" rx="0.6" fill="url(#lk)"/><rect x="6.7" y="8.6" width="1.6" height="4" rx="0.6" fill="#111"/></svg>
<div class="a" style="left:1221px;top:227.5px;width:35px;height:1px;background:#3d3d3d;"></div>
<div class="a" style="left:1221px;top:306.5px;width:35px;height:1px;background:#3d3d3d;"></div>
<div class="a" style="left:1221px;top:387.0px;width:35px;height:1px;background:#3d3d3d;"></div>
<div class="a" style="left:1221px;top:500.0px;width:35px;height:1px;background:#3d3d3d;"></div>
<div class="a" style="left:1263px;top:127.5px;width:34px;height:1px;background:#3d3d3d;"></div>
<div class="a" style="left:1263px;top:306.5px;width:34px;height:1px;background:#3d3d3d;"></div>
<div class="a" style="left:1263px;top:520.5px;width:34px;height:1px;background:#3d3d3d;"></div>
<svg width="16" height="16" viewBox="0 0 16 16" style="left:1231px;top:97px;"><path d="M0.6 0.4 H8 L11.6 4 V14.6 H0.6 Z" fill="#f6f6f6" stroke="#d8d8d8" stroke-width="0.5"/><path d="M8 0.4 V4 H11.6 Z" fill="#cfcfcf"/><circle cx="11.4" cy="8" r="3.5" fill="#2f6fc4" stroke="#dfe8f6" stroke-width="0.7"/><path d="M9.4 8 H13.4 M11.4 6 V10" stroke="#fff" stroke-width="1.1"/></svg>
<svg width="17" height="16" viewBox="0 0 17 16" style="left:1230px;top:131px;"><path d="M0.6 2.2 C0.6 1 1 0.6 2 0.6 H6 L7.4 2.6 H15 C15.8 2.6 16 3 16 3.8 V13.6 C16 14.6 15.6 15 14.6 15 H2 C1 15 0.6 14.6 0.6 13.6 Z" fill="#d8bf98" stroke="#e8d8bc" stroke-width="0.6"/><path d="M0.6 9.4 L16 8.4 V13.6 C16 14.6 15.6 15 14.6 15 H2 C1 15 0.6 14.6 0.6 13.6 Z" fill="#cbb086"/><rect x="4.6" y="4.8" width="8.4" height="4.4" rx="0.6" fill="#fafafa" stroke="#bdbdbd" stroke-width="0.5"/><rect x="6" y="6.6" width="5.6" height="0.9" fill="#888"/></svg>
<svg width="13" height="16" viewBox="0 0 13 16" style="left:1232px;top:163px;"><path d="M5.2 0.6 H7.8 V6 H10.6 L6.5 10.2 L2.4 6 H5.2 Z" fill="#fbfbfb" stroke="#ddd" stroke-width="0.4"/><path d="M0.6 9 H3.4 L4 11 H9 L9.6 9 H12.4 V15.4 H0.6 Z" fill="#3a7bd0"/><rect x="0.6" y="12.4" width="11.8" height="3" fill="#2f6fc4"/><rect x="4" y="9.4" width="5" height="1.4" fill="#f4f4f4"/></svg>
<svg width="15" height="15" viewBox="0 0 15 15" style="left:1231px;top:197px;"><rect x="2.4" y="0.4" width="10" height="4.6" fill="#e8e8e8" stroke="#fafafa" stroke-width="0.6"/><rect x="3.6" y="1.6" width="7.6" height="1.6" fill="#333"/><rect x="0.6" y="4.4" width="13.6" height="5.6" rx="0.8" fill="#d9d9d9" stroke="#f4f4f4" stroke-width="0.6"/><rect x="1.6" y="6.4" width="11.6" height="1.2" fill="#555"/><rect x="2.8" y="9" width="9.2" height="5.4" fill="#fbfdf8" stroke="#e4e4e4" stroke-width="0.5"/><rect x="4" y="10.6" width="6.6" height="1" fill="#b8d8a0"/></svg>
<svg width="18" height="15" viewBox="0 0 18 15" style="left:1229px;top:244px;"><path d="M6.4 0.6 H13 L16.6 4 V14.4 H6.4 Z" fill="#f4f4f4" stroke="#d4d4d4" stroke-width="0.5"/><path d="M13 0.6 V4 H16.6 Z" fill="#c4c4c4"/><path d="M0.6 7.4 H8" stroke="#0a0a0a" stroke-width="1.4"/><path d="M7.4 4.6 L11 7.4 L7.4 10.2 Z" fill="#0a0a0a"/></svg>
<svg width="17" height="15" viewBox="0 0 17 15" style="left:1230px;top:277px;"><path d="M0.8 0.6 H7.4 L11 4 V14.4 H0.8 Z" fill="#f4f4f4" stroke="#d4d4d4" stroke-width="0.5"/><path d="M7.4 0.6 V4 H11 Z" fill="#c4c4c4"/><path d="M6 7.6 H13" stroke="#0a0a0a" stroke-width="1.4"/><path d="M12.4 4.8 L16 7.6 L12.4 10.4 Z" fill="#0a0a0a"/></svg>
<svg width="17" height="13" viewBox="0 0 17 13" style="left:1230px;top:325px;"><path d="M4.4 4.6 H10.4 C13.6 4.6 14.8 6.4 14.6 8 C14.4 10 12.4 10.8 9.4 10.6" fill="none" stroke="#f0c818" stroke-width="2.3" stroke-linecap="round"/><path d="M6.6 0.8 L1.4 4.6 L6.6 8.4 Z" fill="#f0c818" stroke="#f0c818" stroke-width="0.8" stroke-linejoin="round"/><path d="M4.4 4 H10.4" stroke="#fff2a0" stroke-width="0.7"/></svg>
<svg width="17" height="12" viewBox="0 0 17 12" style="left:1230px;top:359px;"><path d="M12.6 4.2 H6.4 C3.2 4.2 2.2 6 2.4 7.4 C2.6 9.4 4.6 10.2 7.4 10" fill="none" stroke="#4f6a36" stroke-width="2" stroke-linecap="round"/><path d="M10.4 0.6 L15.6 4.2 L10.4 7.8 Z" fill="#4f6a36"/></svg>
<svg width="18" height="16" viewBox="0 0 18 16" style="left:1229px;top:403px;"><rect x="0.8" y="0.6" width="10" height="10" fill="#f0f0f0" stroke="#cfcfcf" stroke-width="0.5"/><g fill="#888"><rect x="2.4" y="2.6" width="6.4" height="0.9"/><rect x="2.4" y="4.6" width="6.4" height="0.9"/><rect x="2.4" y="6.6" width="4" height="0.9"/></g><rect x="7" y="6" width="10" height="9.6" fill="#f6f6f6" stroke="#4a4a4a" stroke-width="0.7"/><g fill="#888"><rect x="8.8" y="8.2" width="6.4" height="0.9"/><rect x="8.8" y="10.2" width="6.4" height="0.9"/><rect x="8.8" y="12.2" width="4" height="0.9"/></g></svg>
<svg width="17" height="17" viewBox="0 0 17 17" style="left:1230px;top:436px;"><path d="M2.2 0.6 L10.2 10.4 L8.4 11.6 L1.2 2.6 Z" fill="#f4f4f4"/><path d="M14.8 0.6 L6.8 10.4 L8.6 11.6 L15.8 2.6 Z" fill="#e4e4e4"/><circle cx="4" cy="12.8" r="2.7" fill="none" stroke="#e01818" stroke-width="1.9"/><circle cx="13" cy="12.8" r="2.7" fill="none" stroke="#e01818" stroke-width="1.9"/></svg>
<svg width="17" height="16" viewBox="0 0 17 16" style="left:1230px;top:470px;"><rect x="0.8" y="1.6" width="12.4" height="13.8" rx="0.8" fill="#d9a850" stroke="#f0d090" stroke-width="0.6"/><rect x="4" y="0.4" width="6" height="2.8" rx="0.6" fill="#8a8a8a" stroke="#d0d0d0" stroke-width="0.5"/><rect x="6" y="5.4" width="10.4" height="10" fill="#f8f8f8" stroke="#5a5a5a" stroke-width="0.6"/><g fill="#888"><rect x="7.8" y="7.6" width="6.8" height="0.9"/><rect x="7.8" y="9.6" width="6.8" height="0.9"/><rect x="7.8" y="11.6" width="4.4" height="0.9"/></g></svg>
<svg width="17" height="15" viewBox="0 0 17 15" style="left:1230px;top:517px;"><rect x="0.8" y="0.6" width="10.4" height="9.6" fill="#c4d4e8" stroke="#eef2f8" stroke-width="0.9"/><rect x="5" y="4.4" width="11" height="10" fill="#b8cce4" stroke="#f2f5fa" stroke-width="1"/><rect x="4.2" y="3.6" width="12.6" height="11.6" fill="none" stroke="#222" stroke-width="0.5"/></svg>
<svg width="17" height="16" viewBox="0 0 17 16" style="left:1230px;top:550px;"><rect x="0.8" y="0.6" width="10.4" height="9.6" fill="#c4d4e8" stroke="#eef2f8" stroke-width="0.9"/><rect x="5" y="4.4" width="11" height="10.6" fill="#c8d8ec" stroke="#f2f5fa" stroke-width="1"/><rect x="4.2" y="3.6" width="12.6" height="12.2" fill="none" stroke="#222" stroke-width="0.5"/><path d="M8.6 9.6 V8.4 C8.6 5.6 12.6 5.6 12.6 8.4 V9.6" fill="none" stroke="#111" stroke-width="1.1"/><rect x="7.4" y="9.4" width="6.4" height="4.6" fill="#f0c430" stroke="#111" stroke-width="0.5"/></svg>
<svg width="7" height="12" viewBox="0 0 7 12" style="left:1235px;top:601px;"><path d="M0.2 0 L6.4 5.8 L0.2 11.6 Z" fill="#f2f2f2"/></svg>
<svg width="7" height="12" viewBox="0 0 7 12" style="left:1277px;top:601px;"><path d="M0.2 0 L6.4 5.8 L0.2 11.6 Z" fill="#f2f2f2"/></svg>
<div class="a" style="left:1263px;top:88.3px;width:34.2px;height:32.7px;background:#222;border-radius:5px"></div>
<svg width="17" height="17" viewBox="0 0 17 17" style="left:1271.6px;top:96.19999999999999px;"><path d="M3.4 0.4 L6.4 3.4 L3.4 6.4 L0.4 3.4 Z" fill="#1818d8" stroke="#3030b0" stroke-width="0.5"/><path d="M5 5 L10.6 10.4" stroke="#050505" stroke-width="1.3"/><path d="M12 11.8 L7.8 10.6 L10.6 7.8 Z" fill="#050505"/><path d="M13.4 9.8 L16.2 12.8 L13.4 15.8 L10.6 12.8 Z" fill="#0c6a1c" stroke="#1c8a2c" stroke-width="0.7"/></svg>
<svg width="17" height="17" viewBox="0 0 17 17" style="left:1271.6px;top:143.0px;"><path d="M3.4 0.4 L6.4 3.4 L3.4 6.4 L0.4 3.4 Z" fill="#1818d8" stroke="#3030b0" stroke-width="0.5"/><path d="M5 5 L10.6 10.4" stroke="#050505" stroke-width="1.3"/><path d="M12 11.8 L7.8 10.6 L10.6 7.8 Z" fill="#050505"/><path d="M13.4 9.8 L16.2 12.8 L13.4 15.8 L10.6 12.8 Z" fill="#0c6a1c" stroke="#1c8a2c" stroke-width="0.7"/></svg>
<svg width="16" height="16" viewBox="0 0 16 16" style="left:1272px;top:176px;"><path d="M2 12 H13 V1" fill="none" stroke="#1f4a22" stroke-width="0.8" opacity="0.7"/></svg>
<svg width="16" height="16" viewBox="0 0 16 16" style="left:1272px;top:208px;"><path d="M13 1 V12 M2 13 H10" fill="none" stroke="#3a3a3a" stroke-width="0.8"/><circle cx="13" cy="13" r="1.6" fill="none" stroke="#1f4a22" stroke-width="0.8"/></svg>
<svg width="16" height="16" viewBox="0 0 16 16" style="left:1272px;top:241px;"><path d="M2 13 H13 V4" fill="none" stroke="#3d3d3d" stroke-width="0.9" stroke-dasharray="1.5 1"/><circle cx="13" cy="3" r="1.4" fill="none" stroke="#1f4a22" stroke-width="0.8"/></svg>
<svg width="16" height="16" viewBox="0 0 16 16" style="left:1272px;top:274px;"><path d="M2 14 H13 V2" fill="none" stroke="#3d3d3d" stroke-width="0.9" stroke-dasharray="1.5 1"/><circle cx="5" cy="4" r="1.4" fill="none" stroke="#1f4a22" stroke-width="0.8"/></svg>
<div class="a" style="left:1263px;top:315.3px;width:34.2px;height:31.30000000000001px;background:#222;border-radius:5px"></div>
<svg width="17" height="17" viewBox="0 0 17 17" style="left:1271.6px;top:322.6px;"><circle cx="3.4" cy="3.4" r="2.4" fill="#1818d8"/><path d="M5 5 L10.6 10.4" stroke="#050505" stroke-width="1.3"/><path d="M12 11.8 L7.8 10.6 L10.6 7.8 Z" fill="#050505"/><path d="M13.4 9.8 L16.2 12.8 L13.4 15.8 L10.6 12.8 Z" fill="#0c6a1c" stroke="#1c8a2c" stroke-width="0.7"/></svg>
<svg width="18" height="16" viewBox="0 0 18 16" style="left:1271px;top:357px;"><path d="M1.4 1.6 C8 2 12 6 12.6 13.4" fill="none" stroke="#168a1c" stroke-width="1.4"/><path d="M7.6 12 L12.8 14.4 L16.4 9.6" fill="none" stroke="#168a1c" stroke-width="1.3"/></svg>
<svg width="17" height="16" viewBox="0 0 17 16" style="left:1272px;top:390px;"><path d="M1 12.6 L16 3.4 M4 15 L13.6 1" stroke="#6a6a6a" stroke-width="0.9"/><path d="M8.6 5.6 L10.8 7.8 L8.6 10 L6.4 7.8 Z" fill="#16a028"/></svg>
<div class="a" style="left:1263px;top:414.5px;width:34.2px;height:33.0px;background:#222;border-radius:5px"></div>
<svg width="18" height="18" viewBox="0 0 18 18" style="left:1271px;top:422px;"><path d="M1.6 1.6 C7 2.4 8.4 5 9 9.6 C9.4 13.4 13.6 13.6 16.6 8" fill="none" stroke="#8a8a8a" stroke-width="1"/><path d="M9 9 L11.6 11.6 L9 14.2 L6.4 11.6 Z" fill="#0c6a1c" stroke="#22a034" stroke-width="0.7"/></svg>
<svg width="18" height="18" viewBox="0 0 18 18" style="left:1271px;top:455px;"><path d="M2.6 3.6 C8 3.4 8.8 7 9.6 10.6 C10.6 14.6 14.6 13.6 16.6 8.6" fill="none" stroke="#8a8a8a" stroke-width="1"/><path d="M8 1.6 L10.4 4 L8 6.4 L5.6 4 Z" fill="#0c6a1c" stroke="#22a034" stroke-width="0.7"/></svg>
<svg width="17" height="17" viewBox="0 0 17 17" style="left:1272px;top:489px;"><path d="M1.6 14.4 L15.4 2" stroke="#d01818" stroke-width="1.4"/><path d="M3.6 11 L6.6 14 M6.4 8.4 L9.4 11.4 M9.2 5.8 L12.2 8.8 M12 3.4 L14.4 6" stroke="#d01818" stroke-width="1"/><path d="M8.4 5.8 L10.8 8.2 L8.4 10.6 L6 8.2 Z" fill="#16a028"/></svg>
<div class="a" style="left:1263px;top:527.7px;width:34.2px;height:33.0px;background:#222;border-radius:5px"></div>
<svg width="17" height="17" viewBox="0 0 17 17" style="left:1271.6px;top:536.0px;"><circle cx="3.4" cy="3.4" r="2.4" fill="#1818d8"/><path d="M5 5 L10.6 10.4" stroke="#050505" stroke-width="1.3"/><path d="M12 11.8 L7.8 10.6 L10.6 7.8 Z" fill="#050505"/><path d="M13.4 9.8 L16.2 12.8 L13.4 15.8 L10.6 12.8 Z" fill="#0c6a1c" stroke="#1c8a2c" stroke-width="0.7"/></svg>
<div class="t" style="left:2.3px;top:663.2px;font-size:12.5px;color:#e2e2e2;transform:scaleX(0.861);">Relleno:</div>
<div class="t" style="left:14px;top:679.6px;font-size:12.5px;color:#e2e2e2;transform:scaleX(0.801);">Trazo:</div>
<div class="a" style="left:57px;top:660.5px;width:48px;height:16px;background:#000;border-radius:3px"></div>
<div class="t" style="left:59.5px;top:679.6px;font-size:12.5px;color:#e2e2e2;transform:scaleX(0.934);font-style:italic;">Ninguno</div>
<div class="t" style="left:114.5px;top:679.6px;font-size:12.5px;color:#e2e2e2;transform:scaleX(0.831);">0.756</div>
<div class="t" style="left:147.6px;top:670.5px;font-size:12.5px;color:#e2e2e2;transform:scaleX(0.78);">O:</div>
<div class="box" style="left:160.3px;top:661px;width:64.19999999999999px;height:31px"></div>
<div class="t" style="left:163.6px;top:671.0px;font-size:12.5px;color:#e8e8e8;transform:scaleX(0.806);">100</div>
<div class="a" style="left:191.5px;top:662px;width:1px;height:29px;background:#353535;"></div>
<div class="a" style="left:208.3px;top:662px;width:1px;height:29px;background:#353535;"></div>
<div class="a" style="left:195px;top:676px;width:10px;height:2px;background:#f4f4f4;"></div>
<div class="a" style="left:212px;top:676px;width:10px;height:2px;background:#636363;"></div>
<div class="a" style="left:216px;top:672px;width:2px;height:10px;background:#636363;"></div>
<div class="a" style="left:238px;top:661px;width:1px;height:32px;background:#3a3a3a;"></div>
<svg width="17" height="15" viewBox="0 0 17 15" style="left:249px;top:668px;"><path d="M1 8.6 C4.6 3.4 12 3.4 15.8 8.6 C12 13.6 4.6 13.6 1 8.6 Z" fill="#f4f4f4" stroke="#0c0c0c" stroke-width="1.1"/><circle cx="8.4" cy="8.4" r="3.4" fill="#0a0a0a"/><circle cx="7.4" cy="7.4" r="1" fill="#fff"/><path d="M3 3.6 L4.4 5.2 M6 1.8 L6.8 4 M10 1.6 L9.6 4 M13.4 3 L12 5" stroke="#0c0c0c" stroke-width="1.1"/></svg>
<svg width="14" height="17" viewBox="0 0 14 17" style="left:285px;top:668px;"><path d="M2.4 8.4 C1 3 5 0.8 7.6 1.6 C10 2.2 10.6 4.4 10.8 6.6" fill="none" stroke="#0a0a0a" stroke-width="1.6"/><path d="M2.8 8 L11.6 6.4 L12.6 13.6 L4 15.4 Z" fill="#f0dc78" stroke="#fff8d0" stroke-width="0.8"/><rect x="7" y="9.4" width="1.8" height="3" fill="#333" transform="rotate(-9 8 11)"/></svg>
<div class="box" style="left:309px;top:661px;width:72.8px;height:31px"></div>
<div class="a" style="left:322px;top:676px;width:2px;height:2px;background:#e0e0e0;"></div>
<div class="t" style="left:325.4px;top:671.6px;font-size:11px;color:#ececec;transform:scaleX(0.829);">Capa 1</div>
<svg width="12" height="7" viewBox="0 0 12 7" style="left:359px;top:673.6px;"><path d="M0.2 0.2 H11.4 L5.8 6 Z" fill="#f4f4f4"/></svg>
<div class="t" style="left:387.3px;top:663.8px;font-size:12.5px;color:#f0f0f0;transform:scaleX(0.879);font-weight:bold;">Texto aut</div>
<div class="t" style="left:387.3px;top:678.6px;font-size:12.5px;color:#e2e2e2;transform:scaleX(0.897);">escalado/</div>
<div class="t" style="left:646px;top:663.6px;font-size:12.5px;color:#f0f0f0;transform:scaleX(0.832);font-weight:bold;">Capa 1.</div>
<div class="t" style="left:686px;top:663.6px;font-size:12.5px;color:#e2e2e2;transform:scaleX(0.89);">Vuelva a pulsar en la selección para conmutar los tiradores de</div>
<div class="a" style="left:998px;top:661px;width:1px;height:32px;background:#3a3a3a;"></div>
<div class="t" style="left:1008px;top:663.6px;font-size:12.5px;color:#e2e2e2;transform:scaleX(0.745);">X:</div>
<div class="t" style="left:1008px;top:679.8px;font-size:12.5px;color:#e2e2e2;transform:scaleX(0.773);">Y:</div>
<div class="t" style="left:1035.4px;top:663.6px;font-size:12.5px;color:#e2e2e2;transform:scaleX(0.825);">97.10</div>
<div class="t" style="left:1029.4px;top:679.8px;font-size:12.5px;color:#e2e2e2;transform:scaleX(0.832);">283.29</div>
<div class="t" style="left:1070.8px;top:670.6px;font-size:12.5px;color:#e2e2e2;transform:scaleX(0.792);">Z:</div>
<div class="box" style="left:1090px;top:661px;width:83px;height:31px"></div>
<div class="t" style="left:1100px;top:671.0px;font-size:12.5px;color:#e8e8e8;transform:scaleX(0.839);">46%</div>
<div class="a" style="left:1131.5px;top:662px;width:1px;height:29px;background:#353535;"></div>
<div class="a" style="left:1151.4px;top:662px;width:1px;height:29px;background:#353535;"></div>
<div class="a" style="left:1137px;top:676px;width:10px;height:2px;background:#f4f4f4;"></div>
<div class="a" style="left:1157px;top:676px;width:10px;height:2px;background:#f4f4f4;"></div>
<div class="a" style="left:1161px;top:672px;width:2px;height:10px;background:#f4f4f4;"></div>
<div class="t" style="left:1183.2px;top:670.6px;font-size:12.5px;color:#e2e2e2;transform:scaleX(0.704);">R:</div>
<div class="box" style="left:1202.3px;top:661px;width:88.40000000000009px;height:31px"></div>
<div class="t" style="left:1215.2px;top:671.0px;font-size:12.5px;color:#e8e8e8;transform:scaleX(0.839);">0.00°</div>
<div class="a" style="left:1249.4px;top:662px;width:1px;height:29px;background:#353535;"></div>
<div class="a" style="left:1269.2px;top:662px;width:1px;height:29px;background:#353535;"></div>
<div class="a" style="left:1255px;top:676px;width:10px;height:2px;background:#f4f4f4;"></div>
<div class="a" style="left:1275px;top:676px;width:10px;height:2px;background:#f4f4f4;"></div>
<div class="a" style="left:1279px;top:672px;width:2px;height:10px;background:#f4f4f4;"></div>
<div id="task" class="a"></div>
<svg width="17" height="17" viewBox="0 0 17 17" style="left:14.5px;top:704px;"><path d="M0 2.4 L7.4 1.3 V8 H0 Z M8.4 1.2 L16.4 0 V8 H8.4 Z M0 9 H7.4 V15.6 L0 14.6 Z M8.4 9 H16.4 V17 L8.4 15.8 Z" fill="#fff"/></svg>
<div class="a" style="left:46px;top:693px;width:328px;height:38px;background:#f2f2f2;"></div>
<div class="a" style="left:46px;top:729.5px;width:328px;height:1.5px;background:#4a4a4a;"></div>
<svg width="18" height="19" viewBox="0 0 18 19" style="left:56px;top:702px;"><circle cx="11.2" cy="7" r="5" fill="none" stroke="#2a2a2a" stroke-width="1.4"/><path d="M7.6 10.8 L1.2 17.6" stroke="#2a2a2a" stroke-width="1.5"/></svg>
<div class="t" style="left:84.5px;top:704.6px;font-size:15.5px;color:#3c3c3c;transform:scaleX(0.886);">Escribe aquí para buscar</div>
<div class="a" style="left:516px;top:693px;width:46.4px;height:38px;background:#4b4940;"></div>
<div class="a" style="left:562.6px;top:693px;width:43px;height:38px;background:#5d5b53;"></div>
<div class="a" style="left:606px;top:693px;width:1.2px;height:38px;background:#46443c;"></div>
<div class="a" style="left:380.4px;top:728.6px;width:37.6px;height:2.4px;background:#76b9ed;"></div>
<div class="a" style="left:426.7px;top:728.6px;width:38.3px;height:2.4px;background:#76b9ed;"></div>
<div class="a" style="left:473px;top:728.6px;width:38.7px;height:2.4px;background:#76b9ed;"></div>
<div class="a" style="left:516px;top:728.6px;width:46.4px;height:2.4px;background:#76b9ed;"></div>
<div class="a" style="left:562.6px;top:728.6px;width:44.9px;height:2.4px;background:#76b9ed;"></div>
<svg width="23" height="19" viewBox="0 0 23 19" style="left:388px;top:702px;"><path d="M0.6 2 C0.6 1 1 0.6 2 0.6 H8.4 L10.4 3 H20.6 C21.6 3 22 3.4 22 4.4 V17 H0.6 Z" fill="#f5b92e"/><path d="M0.6 6 H22 V17.4 C22 18 21.6 18.4 21 18.4 H1.6 C1 18.4 0.6 18 0.6 17.4 Z" fill="#fbd661"/><path d="M4.6 10.4 H18 V18.4 H4.6 Z" fill="#3d8fe0"/><path d="M7.6 13.6 H15 V18.4 H7.6 Z" fill="#fbd661"/></svg>
<svg width="24" height="24" viewBox="0 0 24 24" style="left:433.8px;top:700px;"><circle cx="12" cy="12" r="11.8" fill="#1ed760"/><path d="M5.4 8.6 C10 7 15.4 7.4 19.2 9.8 M6.2 12.4 C10 11.2 14.6 11.6 17.8 13.6 M7 15.8 C10 15 13.6 15.2 16.4 17" fill="none" stroke="#0a0a0a" stroke-width="2" stroke-linecap="round"/></svg>
<svg width="28" height="26" viewBox="0 0 28 26" style="left:480.6px;top:700.2px;"><circle cx="11.4" cy="11.4" r="11.2" fill="#e8453c"/><path d="M11.4 11.4 L1.7 5.8 A11.2 11.2 0 0 0 8.6 22.2 Z" fill="#34a853"/><path d="M11.4 11.4 L8.6 22.2 A11.2 11.2 0 0 0 21.1 5.8 Z" fill="#fbc116"/><path d="M11.4 11.4 L1.7 5.8 A11.2 11.2 0 0 1 21.1 5.8 Z" fill="#e8453c"/><circle cx="11.4" cy="11.4" r="5.2" fill="#f4f4f4"/><circle cx="11.4" cy="11.4" r="4.1" fill="#4a8af4"/><circle cx="18.2" cy="18.2" r="7.2" fill="#e9d6b0" stroke="#f6f0e0" stroke-width="0.8"/><path d="M12.4 19.4 C14 15 17 14.6 18.6 16.4 C20 14 23.6 14.6 24.6 18.4 C23 22.6 16 24.6 12.4 19.4 Z" fill="#2a2418"/></svg>
<svg width="24" height="21" viewBox="0 0 24 21" style="left:527.6px;top:701px;"><rect x="7" y="0.4" width="16.4" height="20" rx="1.2" fill="#2b7cd3"/><rect x="7" y="0.4" width="16.4" height="5.2" fill="#41a5ee"/><rect x="7" y="10.4" width="16.4" height="5" fill="#185abd"/><rect x="7" y="15.4" width="16.4" height="5" rx="1" fill="#103f91"/><rect x="0.4" y="4.6" width="12.4" height="12.2" rx="1" fill="#185abd"/></svg>
<div class="t" style="left:530.0px;top:707.0px;font-size:9.5px;color:#fff;font-weight:bold;">W</div>
<svg width="22" height="22" viewBox="0 0 22 22" style="left:575px;top:700.6px;"><path d="M11 0.6 L21 10.4 C21.6 11.4 20.6 12.4 19.4 12.2 L14 12.8 L16.4 14.4 L13 15.6 L15 17.4 L10.4 18 L7 15.6 L9.4 14 L5 13 L2.4 12.4 C0.8 12.4 0.2 11.2 1 10.4 Z" fill="#0a0a0a"/><path d="M11 1.8 L16 6.6 L13.6 8.2 L11.6 6.4 L10 8.4 L7.4 6.6 L5.6 7 Z" fill="#f4f4f4"/><ellipse cx="10.6" cy="19.8" rx="3.4" ry="1.4" fill="#0a0a0a"/><ellipse cx="17.4" cy="16.6" rx="1.8" ry="0.9" fill="#0a0a0a"/><ellipse cx="4.4" cy="15.6" rx="1.6" ry="0.8" fill="#0a0a0a"/></svg>
<svg width="22" height="20" viewBox="0 0 22 20" style="left:884.6px;top:701.4px;"><defs><linearGradient id="sun" x1="0" y1="0" x2="1" y2="1"><stop offset="0" stop-color="#ffd64a"/><stop offset="1" stop-color="#f59a1c"/></linearGradient></defs><circle cx="9" cy="9" r="8.4" fill="url(#sun)"/><path d="M8.4 18.6 C5.6 18.6 5.4 14.8 8 14.4 C8.4 11.4 12.6 10.6 14 13.2 C16 11.8 18.6 13.4 18 15.4 C20.6 15.4 20.6 18.6 18.4 18.6 Z" fill="#cfe2f6"/></svg>
<div class="t" style="left:913px;top:706.0px;font-size:14.5px;color:#f2f2f2;transform:scaleX(0.87);">21°C</div>
<div class="t" style="left:949.5px;top:706.0px;font-size:14.5px;color:#f2f2f2;transform:scaleX(0.918);">Muy soleado</div>
<svg width="14" height="9" viewBox="0 0 14 9" style="left:1040px;top:708.6px;"><path d="M1 8 L6.8 1.6 L12.6 8" fill="none" stroke="#f4f4f4" stroke-width="1.5"/></svg>
<svg width="14" height="18" viewBox="0 0 14 18" style="left:1063px;top:703.6px;"><path d="M3 2.6 C5 0.6 8.6 0.6 10.6 2.6 M3 15.4 C5 17.4 8.6 17.4 10.6 15.4" fill="none" stroke="#f0f0f0" stroke-width="1.1"/><rect x="1" y="5.4" width="8" height="7.2" rx="1.2" fill="none" stroke="#f0f0f0" stroke-width="1.1"/><path d="M9.4 8 L12.8 6 V12 L9.4 10 Z" fill="none" stroke="#f0f0f0" stroke-width="1"/></svg>
<svg width="16" height="13" viewBox="0 0 16 13" style="left:1084px;top:705.4px;"><rect x="3.6" y="3" width="11" height="7" fill="none" stroke="#f0f0f0" stroke-width="1.1"/><rect x="14.8" y="5" width="1.2" height="3" fill="#f0f0f0"/><path d="M1 0.6 V3 M3.6 0.6 V3 M0.4 3 H4.2 V5.4 L2.3 7 L0.4 5.4 Z M2.3 7 V12" fill="none" stroke="#f0f0f0" stroke-width="1"/><path d="M7.4 4.6 L11 8.4 M11 4.6 L7.4 8.4" stroke="#f0f0f0" stroke-width="1"/></svg>
<svg width="14" height="13" viewBox="0 0 14 13" style="left:1109.6px;top:706.6px;"><path d="M1 12.6 C1 6 6 1.2 12.6 1.2 M4.4 12.6 C4.4 8 8 4.6 12.6 4.6 M7.8 12.6 C7.8 10 10 8 12.6 8" fill="none" stroke="#f0f0f0" stroke-width="1.2" opacity="0.9"/><circle cx="11.6" cy="11.6" r="1.2" fill="#f0f0f0"/></svg>
<svg width="17" height="15" viewBox="0 0 17 15" style="left:1129.6px;top:704.6px;"><path d="M0.8 5 H3.6 L7.4 1.4 V13.6 L3.6 10 H0.8 Z" fill="none" stroke="#f0f0f0" stroke-width="1.1"/><path d="M9.6 5 C10.8 6.4 10.8 8.6 9.6 10 M11.8 3.2 C13.8 5.6 13.8 9.4 11.8 11.8 M14 1.4 C17 5 17 10 14 13.6" fill="none" stroke="#f0f0f0" stroke-width="1.1"/></svg>
<div class="t" style="left:1157.5px;top:706.8px;font-size:12px;color:#f2f2f2;transform:scaleX(0.725);">ESP</div>
<div class="t" style="left:1204.6px;top:697.8px;font-size:12px;color:#f2f2f2;transform:scaleX(0.826);">16:27</div>
<div class="t" style="left:1189.7px;top:714.6px;font-size:12px;color:#f2f2f2;transform:scaleX(0.921);">28/02/2022</div>
<svg width="24" height="24" viewBox="0 0 24 24" style="left:1262px;top:703.6px;"><path d="M1 0.8 H14.6 V11.4 H5 L1 15 Z" fill="#f4f4f4"/><g fill="#3a3a30"><rect x="3" y="3" width="9.6" height="1"/><rect x="3" y="5.6" width="9.6" height="1"/><rect x="3" y="8.2" width="6.6" height="1"/></g><circle cx="15" cy="15.6" r="7.4" fill="#3a3a36" stroke="#9a9a96" stroke-width="0.9"/></svg>
<div class="t" style="left:1273.8px;top:713.8px;font-size:12px;color:#f4f4f4;transform:scaleX(0.959);">7</div>
<div class="a" style="left:1295px;top:693px;width:1px;height:38px;background:#5a584c;"></div>
<svg width="15" height="15" viewBox="0 0 15 15" style="left:2px;top:3px;"><defs><linearGradient id="ik" x1="0" y1="0" x2="0" y2="1"><stop offset="0" stop-color="#ffffff"/><stop offset="1" stop-color="#6a86a8"/></linearGradient></defs><path d="M7.4 0.4 L14.4 7.4 C15 8.4 14.4 9 13.4 9 L10 9.6 L11.6 10.8 L9.4 11.6 L10.6 12.8 L7.4 14.6 L4.6 12.6 L6.2 11.4 L3.4 10.4 L1.4 9 C0.2 9 -0.2 8.2 0.6 7.4 Z" fill="#0a0a0a"/><path d="M7.4 1.8 L12 6.4 L9.6 7.2 L8 6 L6.4 7.6 L4.4 6.4 L2.8 6.6 Z" fill="url(#ik)"/><rect x="11.6" y="10.4" width="2.2" height="0.9" fill="#111"/><rect x="2" y="12.2" width="2.2" height="0.9" fill="#111"/></svg>
<div class="a" style="left:1186px;top:9.5px;width:9.4px;height:1.1px;background:#3a3a3a;"></div>
<svg width="11" height="11" viewBox="0 0 11 11" style="left:1228px;top:4.4px;"><rect x="0.6" y="2.6" width="7.4" height="7.4" fill="none" stroke="#1a1a1a" stroke-width="1.1"/><path d="M2.6 2.6 V0.6 H10 V8 H8" fill="none" stroke="#1a1a1a" stroke-width="1.1"/></svg>
<svg width="11" height="11" viewBox="0 0 11 11" style="left:1272px;top:4.6px;"><path d="M0.4 0.4 L10 9.8 M10 0.4 L0.4 9.8" stroke="#1a1a1a" stroke-width="1.1"/></svg>
<div class="a" style="left:1174px;top:86.5px;width:16.5px;height:22px;background:#2c2c2c;border:1px solid #242424;border-radius:5px"></div>
<div class="a" style="left:1175px;top:89.5px;width:14.6px;height:14.4px;background:linear-gradient(#fdfdfd,#e4e4e4);border-radius:4px"></div>
<div class="t" style="left:1178.6px;top:91.6px;font-size:10.5px;color:#fdfdfd;font-weight:bold;-webkit-text-stroke:1.1px #858585;paint-order:stroke fill;">1</div>
<div class="a" style="left:1174px;top:602px;width:16.4px;height:23.4px;background:#333;border:1px solid #282828;border-radius:4px"></div>
<svg width="15" height="18" viewBox="0 0 15 18" style="left:1175px;top:605px;"><defs><radialGradient id="cg1" gradientUnits="userSpaceOnUse" cx="1.4" cy="1.6" r="11"><stop offset="0" stop-color="#00ff00"/><stop offset="0.45" stop-color="#00ff00" stop-opacity="0.85"/><stop offset="1" stop-color="#00ff00" stop-opacity="0"/></radialGradient><radialGradient id="cg2" gradientUnits="userSpaceOnUse" cx="13.2" cy="11.2" r="9"><stop offset="0" stop-color="#ff0000"/><stop offset="0.4" stop-color="#ff0030" stop-opacity="0.9"/><stop offset="1" stop-color="#ff0000" stop-opacity="0"/></radialGradient><radialGradient id="cg3" gradientUnits="userSpaceOnUse" cx="3.4" cy="16.2" r="8.5"><stop offset="0" stop-color="#0000ff"/><stop offset="0.4" stop-color="#2000ff" stop-opacity="0.9"/><stop offset="1" stop-color="#0000ff" stop-opacity="0"/></radialGradient></defs><path d="M1.2 1.4 L13.4 11.2 L3.4 16.2 Z" fill="#f4fff4"/><path d="M1.2 1.4 L13.4 11.2 L3.4 16.2 Z" fill="url(#cg1)"/><path d="M1.2 1.4 L13.4 11.2 L3.4 16.2 Z" fill="url(#cg3)"/><path d="M1.2 1.4 L13.4 11.2 L3.4 16.2 Z" fill="url(#cg2)"/><path d="M1.4 0.8 L13.8 10.8" stroke="#0a0a0a" stroke-width="1.3"/></svg>
<div class="t" style="left:987px;top:620.6px;font-size:18.5px;color:rgba(160,160,160,0.7);transform:scaleX(1.017);">Activar Windows</div>
<div class="t" style="left:987px;top:644.8px;font-size:14px;color:rgba(150,150,150,0.78);transform:scaleX(1.006);">Ve a Configuración para activar Windows.</div>
<div class="a" style="left:436px;top:552px;width:206px;height:141px;background:#535353;box-shadow:0 0 7px rgba(0,0,0,0.4);clip-path:inset(-10px -10px 0 -10px)"></div>
<svg width="16" height="16" viewBox="0 0 16 16" style="left:444px;top:559.4px;"><rect x="4.6" y="0.4" width="11" height="15" rx="0.9" fill="#2b7cd3"/><rect x="4.6" y="0.4" width="11" height="4" fill="#41a5ee"/><rect x="4.6" y="8" width="11" height="3.8" fill="#185abd"/><rect x="4.6" y="11.6" width="11" height="3.8" fill="#103f91"/><rect x="0.2" y="3.4" width="9" height="9" rx="0.7" fill="#185abd"/></svg>
<div class="t" style="left:446.2px;top:564.6px;font-size:7px;color:#fff;font-weight:bold;">W</div>
<div class="t" style="left:467px;top:560.6px;font-size:12.5px;color:#fff;transform:scaleX(0.923);">contendio 4. - Word</div>
<div class="a" style="left:444.8px;top:583.4px;width:188.8px;height:101px;background:#e6e6e6;overflow:hidden">
<div class="a" style="left:0.0px;top:0.0px;width:188.8px;height:8.8px;background:#2b579a;"></div>
<div class="a" style="left:1.2px;top:1.2px;width:12.0px;height:0.8px;background:#9ab0d8;"></div>
<div class="a" style="left:100.2px;top:1.2px;width:14.0px;height:0.8px;background:#9ab0d8;"></div>
<div class="a" style="left:1.2px;top:6.0px;width:118.0px;height:0.9px;background:#8aa4d0;"></div>
<div class="a" style="left:157.2px;top:0.6px;width:3.0px;height:2.4px;background:#e8e8e8;border-radius:50%"></div>
<div class="a" style="left:173.2px;top:6.0px;width:12.0px;height:0.9px;background:#8aa4d0;"></div>
<div class="a" style="left:0.0px;top:8.8px;width:188.8px;height:1.6px;background:#f3f3f3;"></div>
<div class="a" style="left:18.0px;top:9.8px;width:76.0px;height:1.2px;background:#c9c9c9;"></div>
<div class="a" style="left:0.0px;top:10.4px;width:3.0px;height:88.0px;background:#f0f0f0;"></div>
<div class="a" style="left:18.0px;top:12.6px;width:75.3px;height:85.5px;background:#fff;"></div>
<div class="a" style="left:96.0px;top:12.6px;width:75.5px;height:85.5px;background:#fff;"></div>
<div class="a" style="left:0.0px;top:98.1px;width:188.8px;height:3.0px;background:#f1f1f1;"></div>
<div class="a" style="left:1.2px;top:99.2px;width:40.0px;height:0.8px;background:#a0a0a0;"></div>
<div class="a" style="left:155.2px;top:99.2px;width:30.0px;height:0.8px;background:#a0a0a0;"></div>
<div class="a" style="left:28.2px;top:26.2px;width:50.0px;height:1.6px;background:#8a8a8a;"></div>
<div class="a" style="left:28.2px;top:30.0px;width:47.0px;height:1.6px;background:#8a8a8a;"></div>
<div class="a" style="left:28.2px;top:35.4px;width:9.0px;height:1.2px;background:#3a5ad0;"></div>
<div class="a" style="left:28.2px;top:39.4px;width:54.0px;height:1.3px;background:#c86a6a;"></div>
<div class="a" style="left:28.2px;top:41.6px;width:54.0px;height:1.3px;background:#c86a6a;"></div>
<div class="a" style="left:28.2px;top:43.8px;width:52.0px;height:1.2px;background:#d08080;"></div>
<div class="a" style="left:28.2px;top:45.4px;width:6.0px;height:1.0px;background:#d08080;"></div>
<div class="a" style="left:35.2px;top:52.0px;width:43.0px;height:15.0px;background:#1c1c1e;border-radius:3px 3px 2px 2px"></div>
<div class="a" style="left:38.2px;top:51.4px;width:30.0px;height:2.0px;background:#2a2a2c;border-radius:2px"></div>
<div class="a" style="left:41.2px;top:58.2px;width:26.0px;height:3.4px;background:#0a0a0a;"></div>
<div class="a" style="left:42.7px;top:63.6px;width:5.4px;height:4.0px;background:#e8c020;"></div>
<div class="a" style="left:48.1px;top:63.6px;width:5.4px;height:4.0px;background:#20b8d8;"></div>
<div class="a" style="left:53.5px;top:63.6px;width:5.4px;height:4.0px;background:#e040a0;"></div>
<div class="a" style="left:58.9px;top:63.6px;width:5.4px;height:4.0px;background:#f0a020;"></div>
<div class="a" style="left:34.2px;top:67.2px;width:45.0px;height:1.4px;background:#d8d8d8;"></div>
<div class="a" style="left:28.2px;top:79.4px;width:34.5px;height:1.2px;background:#c85a5a;"></div>
<div class="a" style="left:106.2px;top:25.2px;width:44.8px;height:66.2px;background:#b7c3e6;"></div>
<div class="a" style="left:106.2px;top:25.2px;width:44.8px;height:3.6px;background:#a4b2dc;"></div>
<div class="a" style="left:124.2px;top:26.2px;width:9.0px;height:1.4px;background:#5a5a6a;"></div>
<div class="t" style="left:118.8px;top:31.2px;font-size:3.6px;font-style:italic;font-weight:bold;color:#444">Aida Plays</div>
<div class="t" style="left:111.0px;top:36.6px;font-size:8.2px;color:#3c3c44;transform:scaleX(0.6);letter-spacing:-0.1px">CUT SETTINGS</div>
<div class="a" style="left:106.2px;top:45.2px;width:44.8px;height:0.8px;background:#8a98c8;"></div>
<div class="a" style="left:118.2px;top:47.2px;width:21.0px;height:1.1px;background:#5a5a6a;"></div>
<div class="a" style="left:108.0px;top:50.4px;width:41.0px;height:3.0px;background:#7f96d2;"></div>
<div class="a" style="left:108.0px;top:53.8px;width:41.0px;height:2.5px;background:#ffffff;"></div>
<div class="a" style="left:108.8px;top:54.6px;width:12.0px;height:0.9px;background:#777;"></div>
<div class="a" style="left:130.6px;top:54.3px;width:0.6px;height:1.6px;background:#888;"></div>
<div class="a" style="left:137.2px;top:54.3px;width:0.6px;height:1.6px;background:#888;"></div>
<div class="a" style="left:143.8px;top:54.3px;width:0.6px;height:1.6px;background:#888;"></div>
<div class="a" style="left:108.0px;top:56.9px;width:41.0px;height:2.5px;background:#c9c9cf;"></div>
<div class="a" style="left:108.8px;top:57.7px;width:17.0px;height:0.9px;background:#777;"></div>
<div class="a" style="left:130.6px;top:57.4px;width:0.6px;height:1.6px;background:#888;"></div>
<div class="a" style="left:137.2px;top:57.4px;width:0.6px;height:1.6px;background:#888;"></div>
<div class="a" style="left:143.8px;top:57.4px;width:0.6px;height:1.6px;background:#888;"></div>
<div class="a" style="left:108.0px;top:60.0px;width:41.0px;height:2.5px;background:#ffffff;"></div>
<div class="a" style="left:108.8px;top:60.8px;width:15.0px;height:0.9px;background:#777;"></div>
<div class="a" style="left:130.6px;top:60.5px;width:0.6px;height:1.6px;background:#888;"></div>
<div class="a" style="left:137.2px;top:60.5px;width:0.6px;height:1.6px;background:#888;"></div>
<div class="a" style="left:143.8px;top:60.5px;width:0.6px;height:1.6px;background:#888;"></div>
<div class="a" style="left:108.0px;top:63.1px;width:41.0px;height:2.5px;background:#c9c9cf;"></div>
<div class="a" style="left:108.8px;top:63.9px;width:13.0px;height:0.9px;background:#777;"></div>
<div class="a" style="left:130.6px;top:63.6px;width:0.6px;height:1.6px;background:#888;"></div>
<div class="a" style="left:137.2px;top:63.6px;width:0.6px;height:1.6px;background:#888;"></div>
<div class="a" style="left:143.8px;top:63.6px;width:0.6px;height:1.6px;background:#888;"></div>
<div class="a" style="left:108.0px;top:66.2px;width:41.0px;height:2.5px;background:#ffffff;"></div>
<div class="a" style="left:108.8px;top:67.0px;width:18.0px;height:0.9px;background:#777;"></div>
<div class="a" style="left:130.6px;top:66.7px;width:0.6px;height:1.6px;background:#888;"></div>
<div class="a" style="left:137.2px;top:66.7px;width:0.6px;height:1.6px;background:#888;"></div>
<div class="a" style="left:143.8px;top:66.7px;width:0.6px;height:1.6px;background:#888;"></div>
<div class="a" style="left:108.0px;top:69.3px;width:41.0px;height:2.5px;background:#c9c9cf;"></div>
<div class="a" style="left:108.8px;top:70.1px;width:16.0px;height:0.9px;background:#777;"></div>
<div class="a" style="left:130.6px;top:69.8px;width:0.6px;height:1.6px;background:#888;"></div>
<div class="a" style="left:137.2px;top:69.8px;width:0.6px;height:1.6px;background:#888;"></div>
<div class="a" style="left:143.8px;top:69.8px;width:0.6px;height:1.6px;background:#888;"></div>
<div class="a" style="left:108.0px;top:72.4px;width:41.0px;height:2.5px;background:#ffffff;"></div>
<div class="a" style="left:108.8px;top:73.2px;width:14.0px;height:0.9px;background:#777;"></div>
<div class="a" style="left:130.6px;top:72.9px;width:0.6px;height:1.6px;background:#888;"></div>
<div class="a" style="left:137.2px;top:72.9px;width:0.6px;height:1.6px;background:#888;"></div>
<div class="a" style="left:143.8px;top:72.9px;width:0.6px;height:1.6px;background:#888;"></div>
<div class="a" style="left:108.0px;top:75.5px;width:41.0px;height:2.5px;background:#c9c9cf;"></div>
<div class="a" style="left:108.8px;top:76.3px;width:12.0px;height:0.9px;background:#777;"></div>
<div class="a" style="left:130.6px;top:76.0px;width:0.6px;height:1.6px;background:#888;"></div>
<div class="a" style="left:137.2px;top:76.0px;width:0.6px;height:1.6px;background:#888;"></div>
<div class="a" style="left:143.8px;top:76.0px;width:0.6px;height:1.6px;background:#888;"></div>
<div class="a" style="left:108.0px;top:78.6px;width:41.0px;height:2.5px;background:#ffffff;"></div>
<div class="a" style="left:108.8px;top:79.4px;width:17.0px;height:0.9px;background:#777;"></div>
<div class="a" style="left:130.6px;top:79.1px;width:0.6px;height:1.6px;background:#888;"></div>
<div class="a" style="left:137.2px;top:79.1px;width:0.6px;height:1.6px;background:#888;"></div>
<div class="a" style="left:143.8px;top:79.1px;width:0.6px;height:1.6px;background:#888;"></div>
<div class="a" style="left:113.2px;top:83.8px;width:31.0px;height:0.9px;background:#6a6a7a;"></div>
<div class="a" style="left:116.2px;top:86.0px;width:25.0px;height:0.9px;background:#6a6a7a;"></div>
<div class="a" style="left:110.2px;top:89.2px;width:37.0px;height:0.7px;background:#8a8aa0;"></div>
<div class="a" style="left:106.2px;top:94.0px;width:18.5px;height:1.2px;background:#c85a5a;"></div>
<div class="a" style="left:143.2px;top:96.6px;width:12.0px;height:0.8px;background:#b0b0b0;"></div>
</div>
</body></html>
